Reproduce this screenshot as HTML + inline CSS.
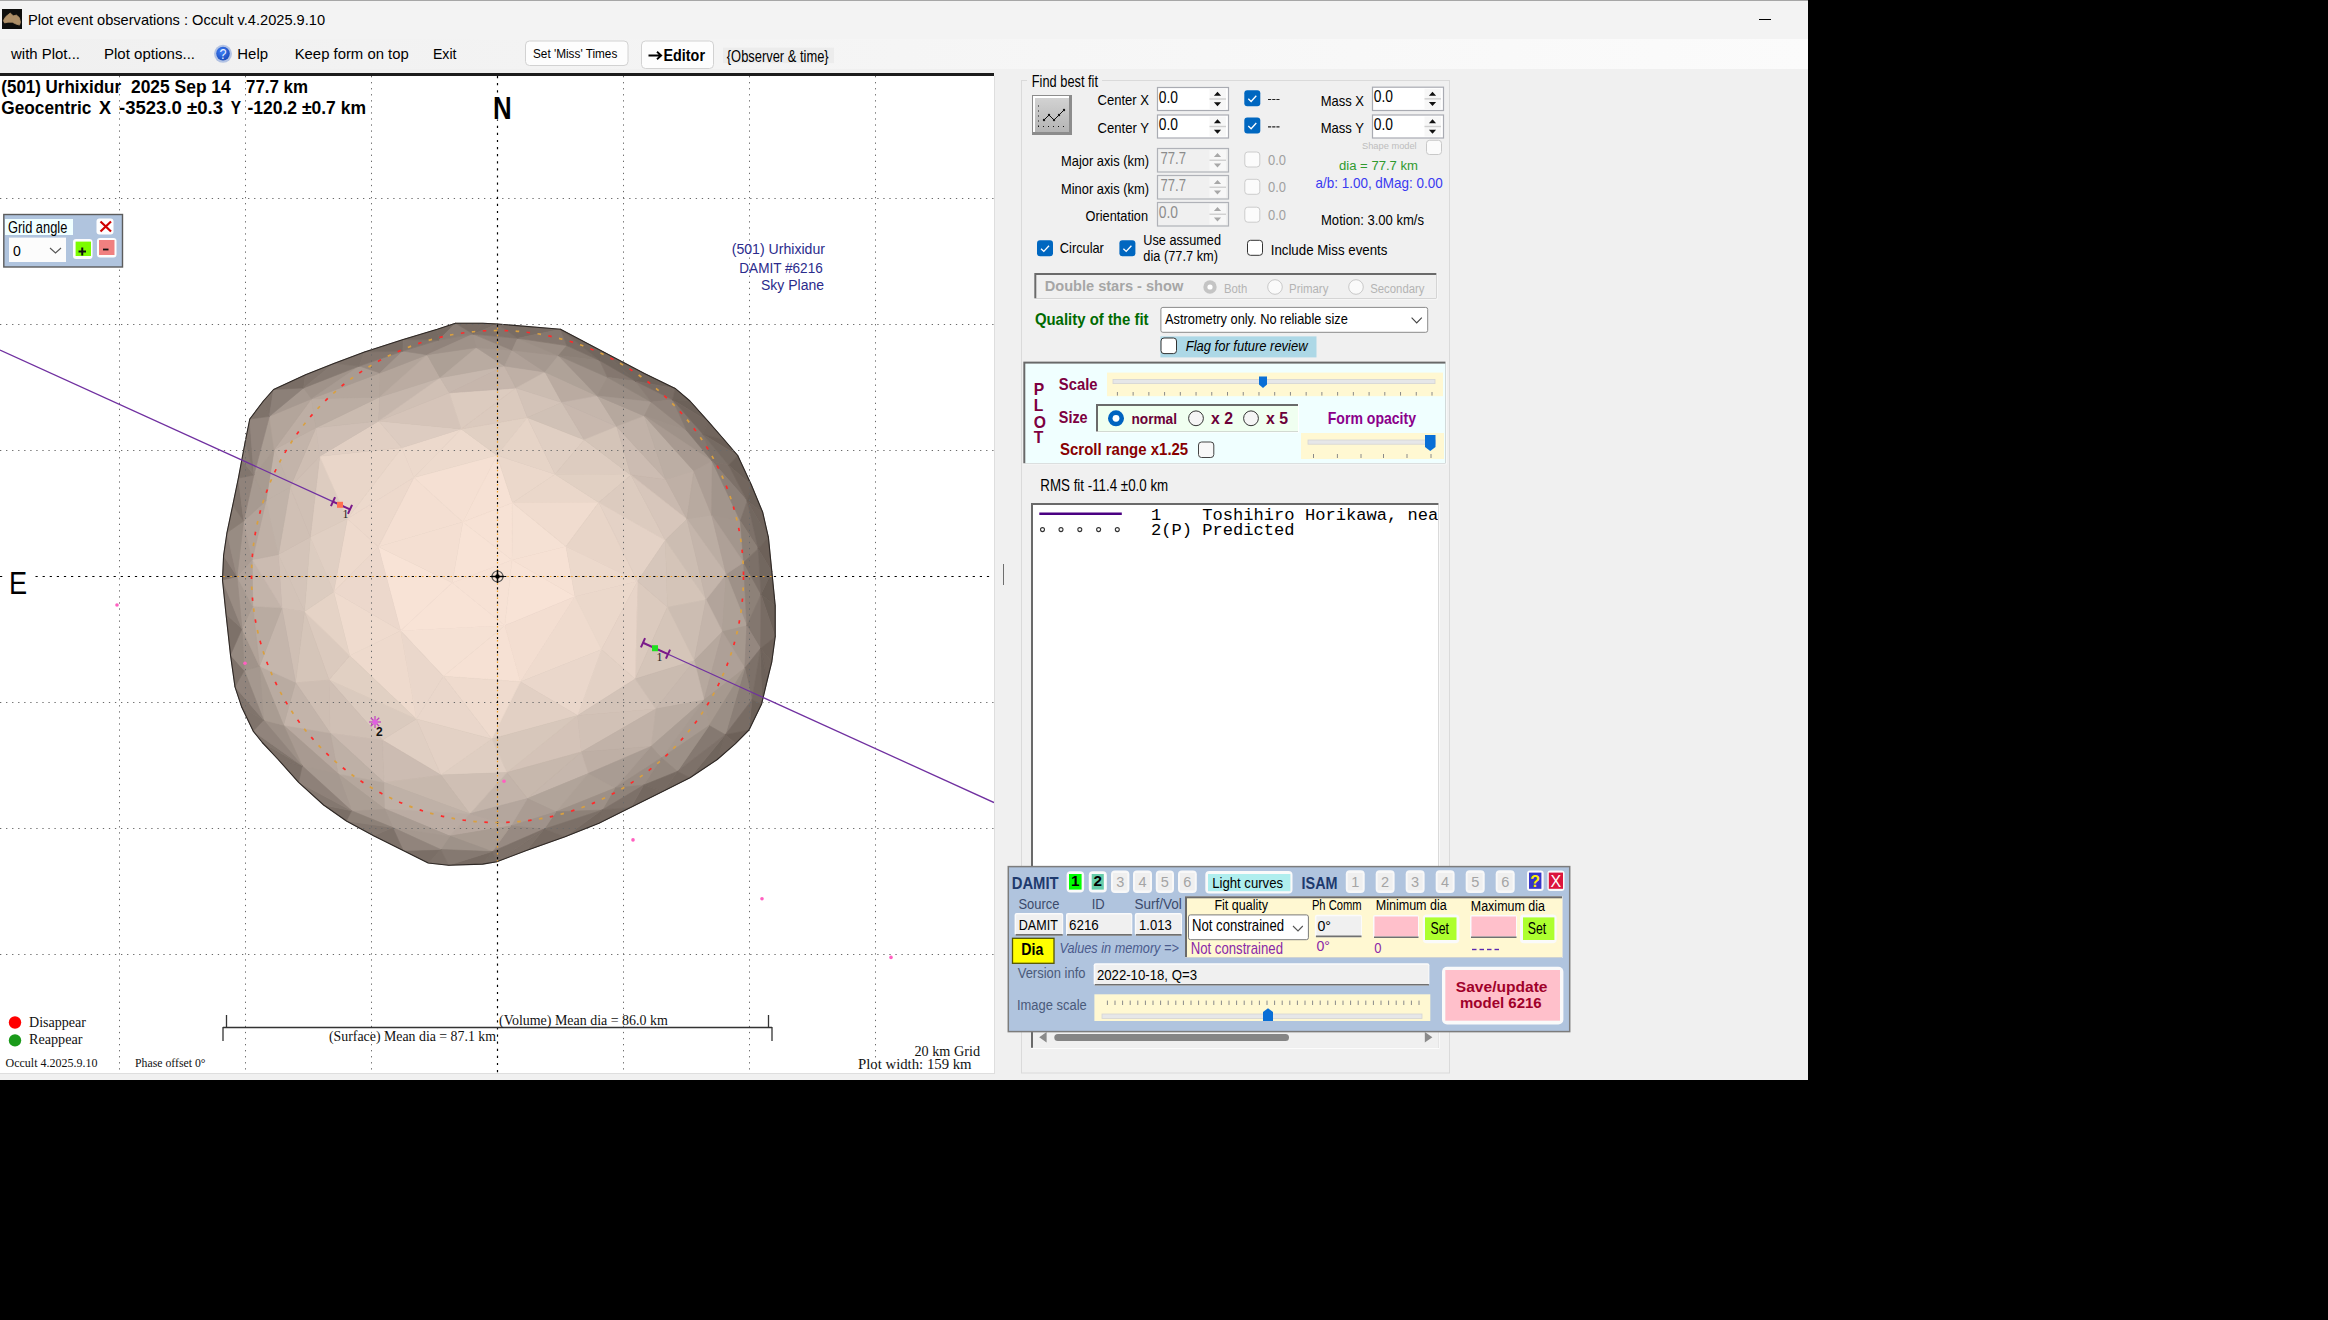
<!DOCTYPE html>
<html><head><meta charset="utf-8"><style>
html,body{margin:0;padding:0;width:2328px;height:1320px;background:#000;overflow:hidden}
svg{display:block}
</style></head><body>
<svg width="1808" height="1080" viewBox="0 0 1808 1080" font-family="Liberation Sans" style="position:absolute;left:0;top:0">
<rect x="0.00" y="0.00" width="1808.00" height="39.00" fill="#f3f3f3"/>
<line x1="0.00" y1="0.50" x2="1808.00" y2="0.50" stroke="#a6a6a6" stroke-width="1"/>
<rect x="2.00" y="9.00" width="20.00" height="20.00" fill="#0e0e0c"/>
<path d="M3.4,20.6 L5.7,16.7 L10.2,13.1 L12.3,14.9 L13.6,15.8 L16.4,15.1 L19.3,17.6 L20.5,22.2 L19.5,25.1 L15.9,24 L12.3,22.2 L8,22.2 L4.5,22.9Z" fill="#ad8e66" stroke="#ad8e66" stroke-width="0.8" stroke-linejoin="round"/>
<text x="28.00" y="24.70" font-family="Liberation Sans" font-size="15.41" fill="#000" textLength="297.03" lengthAdjust="spacingAndGlyphs" xml:space="preserve">Plot event observations : Occult v.4.2025.9.10</text>
<line x1="1759.00" y1="19.50" x2="1771.00" y2="19.50" stroke="#000" stroke-width="1"/>
<defs><linearGradient id="mg" x1="0" x2="1" y1="0" y2="0"><stop offset="0" stop-color="#f0f0f0"/><stop offset="0.5" stop-color="#f5f5f5"/><stop offset="1" stop-color="#fbfbfb"/></linearGradient></defs>
<rect x="0.00" y="39.00" width="1808.00" height="30.00" fill="url(#mg)"/>
<rect x="0.00" y="69.00" width="1808.00" height="1011.00" fill="#f0f0f0"/>
<text x="11.07" y="58.60" font-family="Liberation Sans" font-size="15.12" fill="#000" textLength="68.89" lengthAdjust="spacingAndGlyphs" xml:space="preserve">with Plot...</text>
<text x="104.00" y="58.60" font-family="Liberation Sans" font-size="15.12" fill="#000" textLength="90.99" lengthAdjust="spacingAndGlyphs" xml:space="preserve">Plot options...</text>
<defs><radialGradient id="hg" cx="0.4" cy="0.35" r="0.7"><stop offset="0" stop-color="#3f7ff8"/><stop offset="1" stop-color="#1a4ab8"/></radialGradient></defs>
<circle cx="223" cy="53.8" r="9" fill="#b3c3e4"/>
<circle cx="223" cy="53.6" r="6.8" fill="url(#hg)"/>
<text x="219.60" y="58.60" font-family="Liberation Sans" font-size="13.95" fill="#e8f0ff" textLength="7.01" lengthAdjust="spacingAndGlyphs" xml:space="preserve">?</text>
<text x="237.30" y="58.60" font-family="Liberation Sans" font-size="15.12" fill="#000" textLength="30.73" lengthAdjust="spacingAndGlyphs" xml:space="preserve">Help</text>
<text x="294.70" y="58.60" font-family="Liberation Sans" font-size="15.12" fill="#000" textLength="114.02" lengthAdjust="spacingAndGlyphs" xml:space="preserve">Keep form on top</text>
<text x="433.00" y="58.60" font-family="Liberation Sans" font-size="15.12" fill="#000" textLength="23.43" lengthAdjust="spacingAndGlyphs" xml:space="preserve">Exit</text>
<rect x="525.50" y="41.00" width="102.50" height="24.50" fill="#fdfdfd" stroke="#d2d2d2" stroke-width="1" rx="4"/>
<text x="533.00" y="58.00" font-family="Liberation Sans" font-size="13.08" fill="#000" textLength="84.31" lengthAdjust="spacingAndGlyphs" xml:space="preserve">Set &#x27;Miss&#x27; Times</text>
<rect x="641.50" y="41.00" width="72.00" height="27.50" fill="#fdfdfd" stroke="#d2d2d2" stroke-width="1" rx="4"/>
<path d="M648.5,55.5 h12 M657,51.8 l4.2,3.7 l-4.2,3.7" fill="none" stroke="#000" stroke-width="1.8"/>
<text x="663.50" y="60.60" font-family="Liberation Sans" font-size="16.42" fill="#000" font-weight="bold" textLength="41.48" lengthAdjust="spacingAndGlyphs" xml:space="preserve">Editor</text>
<rect x="723.00" y="47.70" width="111.00" height="15.40" fill="#ececec"/>
<text x="726.80" y="61.90" font-family="Liberation Sans" font-size="15.70" fill="#000" textLength="101.83" lengthAdjust="spacingAndGlyphs" xml:space="preserve">{Observer &amp; time}</text>
<rect x="0.00" y="73.00" width="994.00" height="1000.00" fill="#fff"/>
<rect x="0.00" y="73.00" width="994.00" height="3.00" fill="#1c1c1c"/>
<line x1="994.50" y1="76.00" x2="994.50" y2="1073.00" stroke="#dedede" stroke-width="1"/>
<line x1="0.00" y1="1073.50" x2="995.00" y2="1073.50" stroke="#dedede" stroke-width="1"/>
<line x1="1003.50" y1="564.00" x2="1003.50" y2="585.00" stroke="#6e6e6e" stroke-width="1"/>
<svg x="0" y="76" width="994" height="997" viewBox="0 76 994 997" overflow="hidden">
<polygon points="455.5,323.2 482.7,323.2 497.5,324.0 560.5,329.3 603.6,352.0 644.5,373.6 675.2,388.4 690.0,401.0 708.2,421.4 724.0,439.5 737.7,455.5 751.4,485.0 762.7,512.3 768.4,537.3 771.8,571.4 775.2,605.5 775.2,636.8 771.8,661.8 767.3,680.0 761.6,703.9 749.0,730.0 735.5,743.6 717.3,759.5 690.0,777.7 662.7,791.4 631.0,807.3 599.0,823.2 565.0,836.8 526.4,850.5 496.8,861.8 482.7,864.1 448.6,865.2 428.2,863.0 403.2,850.5 373.6,835.7 346.4,821.0 323.6,805.0 298.6,782.3 278.2,759.5 262.3,742.5 253.2,731.1 241.8,707.3 235.0,686.8 230.5,655.0 226.0,614.0 222.5,580.0 223.6,555.5 227.0,532.7 232.7,505.5 238.4,478.2 241.8,460.0 245.2,441.8 249.8,419.0 263.4,401.0 273.6,389.5 305.5,374.8 333.9,363.4 364.5,352.0 403.2,339.5 437.3,329.3" fill="#a89a90"/>
<polygon points="512.0,560.0 575.0,596.5 504.8,625.5" fill="#f8e3d6" stroke="#f8e3d6" stroke-width="0.6" stroke-linejoin="round"/>
<polygon points="512.0,560.0 504.8,625.5 452.2,582.7" fill="#f7e2d5" stroke="#f7e2d5" stroke-width="0.6" stroke-linejoin="round"/>
<polygon points="512.0,560.0 452.2,582.7 462.8,522.1" fill="#f8e3d6" stroke="#f8e3d6" stroke-width="0.6" stroke-linejoin="round"/>
<polygon points="512.0,560.0 462.8,522.1 512.5,502.7" fill="#f7e2d5" stroke="#f7e2d5" stroke-width="0.6" stroke-linejoin="round"/>
<polygon points="512.0,560.0 512.5,502.7 566.0,546.5" fill="#f5e1d4" stroke="#f5e1d4" stroke-width="0.6" stroke-linejoin="round"/>
<polygon points="512.0,560.0 566.0,546.5 575.0,596.5" fill="#f6e1d4" stroke="#f6e1d4" stroke-width="0.6" stroke-linejoin="round"/>
<polygon points="575.0,596.5 601.5,649.6 637.6,581.3" fill="#ebd8cb" stroke="#ebd8cb" stroke-width="0.6" stroke-linejoin="round"/>
<polygon points="575.0,596.5 520.4,681.8 601.5,649.6" fill="#efdbce" stroke="#efdbce" stroke-width="0.6" stroke-linejoin="round"/>
<polygon points="575.0,596.5 504.8,625.5 520.4,681.8" fill="#f3ded1" stroke="#f3ded1" stroke-width="0.6" stroke-linejoin="round"/>
<polygon points="504.8,625.5 443.4,676.2 520.4,681.8" fill="#f6e1d4" stroke="#f6e1d4" stroke-width="0.6" stroke-linejoin="round"/>
<polygon points="504.8,625.5 400.6,630.8 443.4,676.2" fill="#f5e1d4" stroke="#f5e1d4" stroke-width="0.6" stroke-linejoin="round"/>
<polygon points="504.8,625.5 452.2,582.7 400.6,630.8" fill="#f8e3d6" stroke="#f8e3d6" stroke-width="0.6" stroke-linejoin="round"/>
<polygon points="452.2,582.7 378.3,546.8 400.6,630.8" fill="#f8e3d6" stroke="#f8e3d6" stroke-width="0.6" stroke-linejoin="round"/>
<polygon points="452.2,582.7 462.8,522.1 378.3,546.8" fill="#f4dfd2" stroke="#f4dfd2" stroke-width="0.6" stroke-linejoin="round"/>
<polygon points="462.8,522.1 413.9,477.6 378.3,546.8" fill="#f4dfd2" stroke="#f4dfd2" stroke-width="0.6" stroke-linejoin="round"/>
<polygon points="462.8,522.1 496.9,455.3 413.9,477.6" fill="#f5e0d3" stroke="#f5e0d3" stroke-width="0.6" stroke-linejoin="round"/>
<polygon points="462.8,522.1 512.5,502.7 496.9,455.3" fill="#f6e1d4" stroke="#f6e1d4" stroke-width="0.6" stroke-linejoin="round"/>
<polygon points="512.5,502.7 555.0,474.2 496.9,455.3" fill="#ebd8cb" stroke="#ebd8cb" stroke-width="0.6" stroke-linejoin="round"/>
<polygon points="512.5,502.7 598.8,502.5 555.0,474.2" fill="#ead7ca" stroke="#ead7ca" stroke-width="0.6" stroke-linejoin="round"/>
<polygon points="512.5,502.7 566.0,546.5 598.8,502.5" fill="#f0dccf" stroke="#f0dccf" stroke-width="0.6" stroke-linejoin="round"/>
<polygon points="566.0,546.5 637.6,581.3 598.8,502.5" fill="#e8d5c8" stroke="#e8d5c8" stroke-width="0.6" stroke-linejoin="round"/>
<polygon points="566.0,546.5 575.0,596.5 637.6,581.3" fill="#ecd9cc" stroke="#ecd9cc" stroke-width="0.6" stroke-linejoin="round"/>
<polygon points="637.6,581.3 635.2,678.9 667.4,607.0" fill="#dbcabe" stroke="#dbcabe" stroke-width="0.6" stroke-linejoin="round"/>
<polygon points="637.6,581.3 601.5,649.6 635.2,678.9" fill="#e7d4c8" stroke="#e7d4c8" stroke-width="0.6" stroke-linejoin="round"/>
<polygon points="601.5,649.6 577.6,715.5 635.2,678.9" fill="#e3d1c5" stroke="#e3d1c5" stroke-width="0.6" stroke-linejoin="round"/>
<polygon points="601.5,649.6 520.4,681.8 577.6,715.5" fill="#ead7cb" stroke="#ead7cb" stroke-width="0.6" stroke-linejoin="round"/>
<polygon points="520.4,681.8 491.8,738.9 577.6,715.5" fill="#e2d0c4" stroke="#e2d0c4" stroke-width="0.6" stroke-linejoin="round"/>
<polygon points="520.4,681.8 443.4,676.2 491.8,738.9" fill="#efdbce" stroke="#efdbce" stroke-width="0.6" stroke-linejoin="round"/>
<polygon points="443.4,676.2 416.4,719.0 491.8,738.9" fill="#ead7cb" stroke="#ead7cb" stroke-width="0.6" stroke-linejoin="round"/>
<polygon points="443.4,676.2 400.6,630.8 416.4,719.0" fill="#ead7cb" stroke="#ead7cb" stroke-width="0.6" stroke-linejoin="round"/>
<polygon points="400.6,630.8 349.7,655.8 416.4,719.0" fill="#eedacd" stroke="#eedacd" stroke-width="0.6" stroke-linejoin="round"/>
<polygon points="400.6,630.8 333.7,591.8 349.7,655.8" fill="#efdbce" stroke="#efdbce" stroke-width="0.6" stroke-linejoin="round"/>
<polygon points="400.6,630.8 378.3,546.8 333.7,591.8" fill="#ecd8cc" stroke="#ecd8cc" stroke-width="0.6" stroke-linejoin="round"/>
<polygon points="378.3,546.8 347.3,518.8 333.7,591.8" fill="#eedacd" stroke="#eedacd" stroke-width="0.6" stroke-linejoin="round"/>
<polygon points="378.3,546.8 413.9,477.6 347.3,518.8" fill="#edd9cc" stroke="#edd9cc" stroke-width="0.6" stroke-linejoin="round"/>
<polygon points="413.9,477.6 401.8,447.8 347.3,518.8" fill="#ecd9cc" stroke="#ecd9cc" stroke-width="0.6" stroke-linejoin="round"/>
<polygon points="413.9,477.6 461.2,428.9 401.8,447.8" fill="#ecd9cc" stroke="#ecd9cc" stroke-width="0.6" stroke-linejoin="round"/>
<polygon points="413.9,477.6 496.9,455.3 461.2,428.9" fill="#eddacd" stroke="#eddacd" stroke-width="0.6" stroke-linejoin="round"/>
<polygon points="496.9,455.3 527.4,417.5 461.2,428.9" fill="#e1d0c3" stroke="#e1d0c3" stroke-width="0.6" stroke-linejoin="round"/>
<polygon points="496.9,455.3 555.0,474.2 527.4,417.5" fill="#e6d4c7" stroke="#e6d4c7" stroke-width="0.6" stroke-linejoin="round"/>
<polygon points="555.0,474.2 584.3,439.8 527.4,417.5" fill="#e0cfc3" stroke="#e0cfc3" stroke-width="0.6" stroke-linejoin="round"/>
<polygon points="555.0,474.2 630.9,474.9 584.3,439.8" fill="#ddccc0" stroke="#ddccc0" stroke-width="0.6" stroke-linejoin="round"/>
<polygon points="555.0,474.2 598.8,502.5 630.9,474.9" fill="#e1d0c3" stroke="#e1d0c3" stroke-width="0.6" stroke-linejoin="round"/>
<polygon points="598.8,502.5 665.4,540.2 630.9,474.9" fill="#dccbbf" stroke="#dccbbf" stroke-width="0.6" stroke-linejoin="round"/>
<polygon points="598.8,502.5 637.6,581.3 665.4,540.2" fill="#e4d2c6" stroke="#e4d2c6" stroke-width="0.6" stroke-linejoin="round"/>
<polygon points="637.6,581.3 667.4,607.0 665.4,540.2" fill="#d6c6bb" stroke="#d6c6bb" stroke-width="0.6" stroke-linejoin="round"/>
<polygon points="667.4,607.0 694.2,660.8 706.0,599.5" fill="#ccbdb2" stroke="#ccbdb2" stroke-width="0.6" stroke-linejoin="round"/>
<polygon points="667.4,607.0 635.2,678.9 694.2,660.8" fill="#d5c5b9" stroke="#d5c5b9" stroke-width="0.6" stroke-linejoin="round"/>
<polygon points="635.2,678.9 655.7,709.0 694.2,660.8" fill="#cabbb0" stroke="#cabbb0" stroke-width="0.6" stroke-linejoin="round"/>
<polygon points="635.2,678.9 577.6,715.5 655.7,709.0" fill="#d3c3b8" stroke="#d3c3b8" stroke-width="0.6" stroke-linejoin="round"/>
<polygon points="577.6,715.5 581.3,752.0 655.7,709.0" fill="#d1c1b6" stroke="#d1c1b6" stroke-width="0.6" stroke-linejoin="round"/>
<polygon points="577.6,715.5 506.9,772.6 581.3,752.0" fill="#d4c3b8" stroke="#d4c3b8" stroke-width="0.6" stroke-linejoin="round"/>
<polygon points="577.6,715.5 491.8,738.9 506.9,772.6" fill="#d7c7bb" stroke="#d7c7bb" stroke-width="0.6" stroke-linejoin="round"/>
<polygon points="491.8,738.9 440.8,775.0 506.9,772.6" fill="#dfcec2" stroke="#dfcec2" stroke-width="0.6" stroke-linejoin="round"/>
<polygon points="491.8,738.9 416.4,719.0 440.8,775.0" fill="#e3d1c5" stroke="#e3d1c5" stroke-width="0.6" stroke-linejoin="round"/>
<polygon points="416.4,719.0 382.3,740.0 440.8,775.0" fill="#e0cfc3" stroke="#e0cfc3" stroke-width="0.6" stroke-linejoin="round"/>
<polygon points="416.4,719.0 329.0,679.7 382.3,740.0" fill="#dacabe" stroke="#dacabe" stroke-width="0.6" stroke-linejoin="round"/>
<polygon points="416.4,719.0 349.7,655.8 329.0,679.7" fill="#e1d0c3" stroke="#e1d0c3" stroke-width="0.6" stroke-linejoin="round"/>
<polygon points="349.7,655.8 304.5,611.6 329.0,679.7" fill="#dbcabe" stroke="#dbcabe" stroke-width="0.6" stroke-linejoin="round"/>
<polygon points="349.7,655.8 333.7,591.8 304.5,611.6" fill="#e5d3c6" stroke="#e5d3c6" stroke-width="0.6" stroke-linejoin="round"/>
<polygon points="333.7,591.8 310.3,536.9 304.5,611.6" fill="#dcccc0" stroke="#dcccc0" stroke-width="0.6" stroke-linejoin="round"/>
<polygon points="333.7,591.8 347.3,518.8 310.3,536.9" fill="#e0cfc3" stroke="#e0cfc3" stroke-width="0.6" stroke-linejoin="round"/>
<polygon points="347.3,518.8 319.7,456.2 310.3,536.9" fill="#ddccc0" stroke="#ddccc0" stroke-width="0.6" stroke-linejoin="round"/>
<polygon points="347.3,518.8 401.8,447.8 319.7,456.2" fill="#e9d6c9" stroke="#e9d6c9" stroke-width="0.6" stroke-linejoin="round"/>
<polygon points="401.8,447.8 378.7,421.0 319.7,456.2" fill="#e1cfc3" stroke="#e1cfc3" stroke-width="0.6" stroke-linejoin="round"/>
<polygon points="401.8,447.8 461.2,428.9 378.7,421.0" fill="#ddccc1" stroke="#ddccc1" stroke-width="0.6" stroke-linejoin="round"/>
<polygon points="461.2,428.9 449.4,392.8 378.7,421.0" fill="#d5c4b9" stroke="#d5c4b9" stroke-width="0.6" stroke-linejoin="round"/>
<polygon points="461.2,428.9 516.1,388.0 449.4,392.8" fill="#dccbbf" stroke="#dccbbf" stroke-width="0.6" stroke-linejoin="round"/>
<polygon points="461.2,428.9 527.4,417.5 516.1,388.0" fill="#dbcabe" stroke="#dbcabe" stroke-width="0.6" stroke-linejoin="round"/>
<polygon points="527.4,417.5 561.9,402.6 516.1,388.0" fill="#d3c3b8" stroke="#d3c3b8" stroke-width="0.6" stroke-linejoin="round"/>
<polygon points="527.4,417.5 584.3,439.8 561.9,402.6" fill="#d0c1b6" stroke="#d0c1b6" stroke-width="0.6" stroke-linejoin="round"/>
<polygon points="584.3,439.8 616.7,426.6 561.9,402.6" fill="#c8b8ae" stroke="#c8b8ae" stroke-width="0.6" stroke-linejoin="round"/>
<polygon points="584.3,439.8 630.9,474.9 616.7,426.6" fill="#d4c4b8" stroke="#d4c4b8" stroke-width="0.6" stroke-linejoin="round"/>
<polygon points="630.9,474.9 665.7,479.4 616.7,426.6" fill="#ccbcb2" stroke="#ccbcb2" stroke-width="0.6" stroke-linejoin="round"/>
<polygon points="630.9,474.9 687.0,519.1 665.7,479.4" fill="#c9b9af" stroke="#c9b9af" stroke-width="0.6" stroke-linejoin="round"/>
<polygon points="630.9,474.9 665.4,540.2 687.0,519.1" fill="#d7c6bb" stroke="#d7c6bb" stroke-width="0.6" stroke-linejoin="round"/>
<polygon points="665.4,540.2 706.0,599.5 687.0,519.1" fill="#ccbdb2" stroke="#ccbdb2" stroke-width="0.6" stroke-linejoin="round"/>
<polygon points="665.4,540.2 667.4,607.0 706.0,599.5" fill="#d4c4b8" stroke="#d4c4b8" stroke-width="0.6" stroke-linejoin="round"/>
<polygon points="706.0,599.5 722.4,631.7 726.2,574.0" fill="#b2a49b" stroke="#b2a49b" stroke-width="0.6" stroke-linejoin="round"/>
<polygon points="706.0,599.5 694.2,660.8 722.4,631.7" fill="#c4b5ab" stroke="#c4b5ab" stroke-width="0.6" stroke-linejoin="round"/>
<polygon points="694.2,660.8 704.1,700.0 722.4,631.7" fill="#b6a89e" stroke="#b6a89e" stroke-width="0.6" stroke-linejoin="round"/>
<polygon points="694.2,660.8 655.7,709.0 704.1,700.0" fill="#c7b8ae" stroke="#c7b8ae" stroke-width="0.6" stroke-linejoin="round"/>
<polygon points="655.7,709.0 651.0,746.4 704.1,700.0" fill="#bbada3" stroke="#bbada3" stroke-width="0.6" stroke-linejoin="round"/>
<polygon points="655.7,709.0 581.3,752.0 651.0,746.4" fill="#c1b2a8" stroke="#c1b2a8" stroke-width="0.6" stroke-linejoin="round"/>
<polygon points="581.3,752.0 588.2,773.6 651.0,746.4" fill="#beafa5" stroke="#beafa5" stroke-width="0.6" stroke-linejoin="round"/>
<polygon points="581.3,752.0 527.4,798.6 588.2,773.6" fill="#c6b7ad" stroke="#c6b7ad" stroke-width="0.6" stroke-linejoin="round"/>
<polygon points="581.3,752.0 506.9,772.6 527.4,798.6" fill="#c7b8ad" stroke="#c7b8ad" stroke-width="0.6" stroke-linejoin="round"/>
<polygon points="506.9,772.6 469.8,813.8 527.4,798.6" fill="#c3b4aa" stroke="#c3b4aa" stroke-width="0.6" stroke-linejoin="round"/>
<polygon points="506.9,772.6 440.8,775.0 469.8,813.8" fill="#cfbfb4" stroke="#cfbfb4" stroke-width="0.6" stroke-linejoin="round"/>
<polygon points="440.8,775.0 383.8,782.3 469.8,813.8" fill="#c7b8ad" stroke="#c7b8ad" stroke-width="0.6" stroke-linejoin="round"/>
<polygon points="440.8,775.0 382.3,740.0 383.8,782.3" fill="#ccbcb2" stroke="#ccbcb2" stroke-width="0.6" stroke-linejoin="round"/>
<polygon points="382.3,740.0 330.1,733.0 383.8,782.3" fill="#cabab0" stroke="#cabab0" stroke-width="0.6" stroke-linejoin="round"/>
<polygon points="382.3,740.0 329.0,679.7 330.1,733.0" fill="#d0c0b5" stroke="#d0c0b5" stroke-width="0.6" stroke-linejoin="round"/>
<polygon points="329.0,679.7 295.5,682.4 330.1,733.0" fill="#cebeb3" stroke="#cebeb3" stroke-width="0.6" stroke-linejoin="round"/>
<polygon points="329.0,679.7 304.5,611.6 295.5,682.4" fill="#d5c5b9" stroke="#d5c5b9" stroke-width="0.6" stroke-linejoin="round"/>
<polygon points="304.5,611.6 281.9,608.0 295.5,682.4" fill="#cfbfb4" stroke="#cfbfb4" stroke-width="0.6" stroke-linejoin="round"/>
<polygon points="304.5,611.6 278.4,554.5 281.9,608.0" fill="#d3c3b8" stroke="#d3c3b8" stroke-width="0.6" stroke-linejoin="round"/>
<polygon points="304.5,611.6 310.3,536.9 278.4,554.5" fill="#d4c4b9" stroke="#d4c4b9" stroke-width="0.6" stroke-linejoin="round"/>
<polygon points="310.3,536.9 290.2,486.9 278.4,554.5" fill="#d0c0b5" stroke="#d0c0b5" stroke-width="0.6" stroke-linejoin="round"/>
<polygon points="310.3,536.9 319.7,456.2 290.2,486.9" fill="#d0c0b5" stroke="#d0c0b5" stroke-width="0.6" stroke-linejoin="round"/>
<polygon points="319.7,456.2 315.9,427.8 290.2,486.9" fill="#cebeb3" stroke="#cebeb3" stroke-width="0.6" stroke-linejoin="round"/>
<polygon points="319.7,456.2 378.7,421.0 315.9,427.8" fill="#cfbfb5" stroke="#cfbfb5" stroke-width="0.6" stroke-linejoin="round"/>
<polygon points="378.7,421.0 379.6,397.0 315.9,427.8" fill="#cabbb0" stroke="#cabbb0" stroke-width="0.6" stroke-linejoin="round"/>
<polygon points="378.7,421.0 440.2,377.8 379.6,397.0" fill="#c5b6ac" stroke="#c5b6ac" stroke-width="0.6" stroke-linejoin="round"/>
<polygon points="378.7,421.0 449.4,392.8 440.2,377.8" fill="#d0c0b5" stroke="#d0c0b5" stroke-width="0.6" stroke-linejoin="round"/>
<polygon points="449.4,392.8 504.5,366.0 440.2,377.8" fill="#c7b8ae" stroke="#c7b8ae" stroke-width="0.6" stroke-linejoin="round"/>
<polygon points="449.4,392.8 516.1,388.0 504.5,366.0" fill="#c6b6ac" stroke="#c6b6ac" stroke-width="0.6" stroke-linejoin="round"/>
<polygon points="516.1,388.0 545.1,372.1 504.5,366.0" fill="#bfb0a6" stroke="#bfb0a6" stroke-width="0.6" stroke-linejoin="round"/>
<polygon points="516.1,388.0 561.9,402.6 545.1,372.1" fill="#cbbcb1" stroke="#cbbcb1" stroke-width="0.6" stroke-linejoin="round"/>
<polygon points="561.9,402.6 597.4,395.9 545.1,372.1" fill="#baaba1" stroke="#baaba1" stroke-width="0.6" stroke-linejoin="round"/>
<polygon points="561.9,402.6 616.7,426.6 597.4,395.9" fill="#c5b6ac" stroke="#c5b6ac" stroke-width="0.6" stroke-linejoin="round"/>
<polygon points="616.7,426.6 644.4,415.9 597.4,395.9" fill="#b6a89e" stroke="#b6a89e" stroke-width="0.6" stroke-linejoin="round"/>
<polygon points="616.7,426.6 665.7,479.4 644.4,415.9" fill="#c1b2a8" stroke="#c1b2a8" stroke-width="0.6" stroke-linejoin="round"/>
<polygon points="665.7,479.4 693.9,471.0 644.4,415.9" fill="#bcaea4" stroke="#bcaea4" stroke-width="0.6" stroke-linejoin="round"/>
<polygon points="665.7,479.4 687.0,519.1 693.9,471.0" fill="#bfb0a6" stroke="#bfb0a6" stroke-width="0.6" stroke-linejoin="round"/>
<polygon points="687.0,519.1 711.7,515.2 693.9,471.0" fill="#b8aaa0" stroke="#b8aaa0" stroke-width="0.6" stroke-linejoin="round"/>
<polygon points="687.0,519.1 726.2,574.0 711.7,515.2" fill="#bbada3" stroke="#bbada3" stroke-width="0.6" stroke-linejoin="round"/>
<polygon points="687.0,519.1 706.0,599.5 726.2,574.0" fill="#c4b5ab" stroke="#c4b5ab" stroke-width="0.6" stroke-linejoin="round"/>
<polygon points="726.2,574.0 746.8,625.8 743.6,562.4" fill="#9e9188" stroke="#9e9188" stroke-width="0.6" stroke-linejoin="round"/>
<polygon points="726.2,574.0 722.4,631.7 746.8,625.8" fill="#aea197" stroke="#aea197" stroke-width="0.6" stroke-linejoin="round"/>
<polygon points="722.4,631.7 744.8,668.0 746.8,625.8" fill="#a5988e" stroke="#a5988e" stroke-width="0.6" stroke-linejoin="round"/>
<polygon points="722.4,631.7 704.1,700.0 744.8,668.0" fill="#aea097" stroke="#aea097" stroke-width="0.6" stroke-linejoin="round"/>
<polygon points="704.1,700.0 709.2,725.5 744.8,668.0" fill="#a6998f" stroke="#a6998f" stroke-width="0.6" stroke-linejoin="round"/>
<polygon points="704.1,700.0 661.5,757.9 709.2,725.5" fill="#a79a91" stroke="#a79a91" stroke-width="0.6" stroke-linejoin="round"/>
<polygon points="704.1,700.0 651.0,746.4 661.5,757.9" fill="#aa9d94" stroke="#aa9d94" stroke-width="0.6" stroke-linejoin="round"/>
<polygon points="651.0,746.4 614.9,788.1 661.5,757.9" fill="#a2958c" stroke="#a2958c" stroke-width="0.6" stroke-linejoin="round"/>
<polygon points="651.0,746.4 588.2,773.6 614.9,788.1" fill="#a99c93" stroke="#a99c93" stroke-width="0.6" stroke-linejoin="round"/>
<polygon points="588.2,773.6 556.0,811.8 614.9,788.1" fill="#ada096" stroke="#ada096" stroke-width="0.6" stroke-linejoin="round"/>
<polygon points="588.2,773.6 527.4,798.6 556.0,811.8" fill="#b1a49a" stroke="#b1a49a" stroke-width="0.6" stroke-linejoin="round"/>
<polygon points="527.4,798.6 510.9,825.9 556.0,811.8" fill="#aa9c93" stroke="#aa9c93" stroke-width="0.6" stroke-linejoin="round"/>
<polygon points="527.4,798.6 469.8,813.8 510.9,825.9" fill="#b4a69d" stroke="#b4a69d" stroke-width="0.6" stroke-linejoin="round"/>
<polygon points="469.8,813.8 449.9,836.1 510.9,825.9" fill="#b7a89f" stroke="#b7a89f" stroke-width="0.6" stroke-linejoin="round"/>
<polygon points="469.8,813.8 384.3,808.7 449.9,836.1" fill="#bbaca3" stroke="#bbaca3" stroke-width="0.6" stroke-linejoin="round"/>
<polygon points="469.8,813.8 383.8,782.3 384.3,808.7" fill="#bfb1a7" stroke="#bfb1a7" stroke-width="0.6" stroke-linejoin="round"/>
<polygon points="383.8,782.3 338.1,773.8 384.3,808.7" fill="#b5a79d" stroke="#b5a79d" stroke-width="0.6" stroke-linejoin="round"/>
<polygon points="383.8,782.3 330.1,733.0 338.1,773.8" fill="#beb0a6" stroke="#beb0a6" stroke-width="0.6" stroke-linejoin="round"/>
<polygon points="330.1,733.0 283.5,725.2 338.1,773.8" fill="#b8a9a0" stroke="#b8a9a0" stroke-width="0.6" stroke-linejoin="round"/>
<polygon points="330.1,733.0 295.5,682.4 283.5,725.2" fill="#c3b4aa" stroke="#c3b4aa" stroke-width="0.6" stroke-linejoin="round"/>
<polygon points="295.5,682.4 259.5,666.2 283.5,725.2" fill="#b9aba1" stroke="#b9aba1" stroke-width="0.6" stroke-linejoin="round"/>
<polygon points="295.5,682.4 281.9,608.0 259.5,666.2" fill="#c5b6ac" stroke="#c5b6ac" stroke-width="0.6" stroke-linejoin="round"/>
<polygon points="281.9,608.0 252.7,606.2 259.5,666.2" fill="#b9aba1" stroke="#b9aba1" stroke-width="0.6" stroke-linejoin="round"/>
<polygon points="281.9,608.0 252.2,559.6 252.7,606.2" fill="#c3b4aa" stroke="#c3b4aa" stroke-width="0.6" stroke-linejoin="round"/>
<polygon points="281.9,608.0 278.4,554.5 252.2,559.6" fill="#cbbbb1" stroke="#cbbbb1" stroke-width="0.6" stroke-linejoin="round"/>
<polygon points="278.4,554.5 266.0,500.8 252.2,559.6" fill="#bfb0a6" stroke="#bfb0a6" stroke-width="0.6" stroke-linejoin="round"/>
<polygon points="278.4,554.5 290.2,486.9 266.0,500.8" fill="#c1b3a9" stroke="#c1b3a9" stroke-width="0.6" stroke-linejoin="round"/>
<polygon points="290.2,486.9 274.2,449.6 266.0,500.8" fill="#c1b3a9" stroke="#c1b3a9" stroke-width="0.6" stroke-linejoin="round"/>
<polygon points="290.2,486.9 315.9,427.8 274.2,449.6" fill="#c3b4aa" stroke="#c3b4aa" stroke-width="0.6" stroke-linejoin="round"/>
<polygon points="315.9,427.8 311.5,398.8 274.2,449.6" fill="#bdaea4" stroke="#bdaea4" stroke-width="0.6" stroke-linejoin="round"/>
<polygon points="315.9,427.8 379.6,397.0 311.5,398.8" fill="#bbada3" stroke="#bbada3" stroke-width="0.6" stroke-linejoin="round"/>
<polygon points="379.6,397.0 380.0,372.9 311.5,398.8" fill="#b5a79d" stroke="#b5a79d" stroke-width="0.6" stroke-linejoin="round"/>
<polygon points="379.6,397.0 427.2,354.7 380.0,372.9" fill="#b3a59b" stroke="#b3a59b" stroke-width="0.6" stroke-linejoin="round"/>
<polygon points="379.6,397.0 440.2,377.8 427.2,354.7" fill="#bbaca2" stroke="#bbaca2" stroke-width="0.6" stroke-linejoin="round"/>
<polygon points="440.2,377.8 476.5,347.6 427.2,354.7" fill="#ada096" stroke="#ada096" stroke-width="0.6" stroke-linejoin="round"/>
<polygon points="440.2,377.8 504.5,366.0 476.5,347.6" fill="#b9aba1" stroke="#b9aba1" stroke-width="0.6" stroke-linejoin="round"/>
<polygon points="504.5,366.0 512.2,350.2 476.5,347.6" fill="#a69990" stroke="#a69990" stroke-width="0.6" stroke-linejoin="round"/>
<polygon points="504.5,366.0 545.1,372.1 512.2,350.2" fill="#afa198" stroke="#afa198" stroke-width="0.6" stroke-linejoin="round"/>
<polygon points="545.1,372.1 558.5,355.6 512.2,350.2" fill="#a69990" stroke="#a69990" stroke-width="0.6" stroke-linejoin="round"/>
<polygon points="545.1,372.1 597.4,395.9 558.5,355.6" fill="#afa298" stroke="#afa298" stroke-width="0.6" stroke-linejoin="round"/>
<polygon points="597.4,395.9 607.5,377.3 558.5,355.6" fill="#9f9289" stroke="#9f9289" stroke-width="0.6" stroke-linejoin="round"/>
<polygon points="597.4,395.9 651.3,402.0 607.5,377.3" fill="#9b8e85" stroke="#9b8e85" stroke-width="0.6" stroke-linejoin="round"/>
<polygon points="597.4,395.9 644.4,415.9 651.3,402.0" fill="#a69990" stroke="#a69990" stroke-width="0.6" stroke-linejoin="round"/>
<polygon points="644.4,415.9 686.6,430.5 651.3,402.0" fill="#9d9087" stroke="#9d9087" stroke-width="0.6" stroke-linejoin="round"/>
<polygon points="644.4,415.9 712.2,461.2 686.6,430.5" fill="#9f9289" stroke="#9f9289" stroke-width="0.6" stroke-linejoin="round"/>
<polygon points="644.4,415.9 693.9,471.0 712.2,461.2" fill="#a89a91" stroke="#a89a91" stroke-width="0.6" stroke-linejoin="round"/>
<polygon points="693.9,471.0 711.7,515.2 712.2,461.2" fill="#ac9e95" stroke="#ac9e95" stroke-width="0.6" stroke-linejoin="round"/>
<polygon points="711.7,515.2 740.3,521.0 712.2,461.2" fill="#a2958c" stroke="#a2958c" stroke-width="0.6" stroke-linejoin="round"/>
<polygon points="711.7,515.2 743.6,562.4 740.3,521.0" fill="#a3968d" stroke="#a3968d" stroke-width="0.6" stroke-linejoin="round"/>
<polygon points="711.7,515.2 726.2,574.0 743.6,562.4" fill="#aea097" stroke="#aea097" stroke-width="0.6" stroke-linejoin="round"/>
<polygon points="743.6,562.4 746.8,625.8 761.0,594.4" fill="#8d8178" stroke="#8d8178" stroke-width="0.6" stroke-linejoin="round"/>
<polygon points="746.8,625.8 760.5,648.5 761.0,594.4" fill="#83776f" stroke="#83776f" stroke-width="0.6" stroke-linejoin="round"/>
<polygon points="746.8,625.8 744.8,668.0 760.5,648.5" fill="#94877f" stroke="#94877f" stroke-width="0.6" stroke-linejoin="round"/>
<polygon points="744.8,668.0 751.9,699.8 760.5,648.5" fill="#7d7169" stroke="#7d7169" stroke-width="0.6" stroke-linejoin="round"/>
<polygon points="744.8,668.0 725.3,734.7 751.9,699.8" fill="#8b7f77" stroke="#8b7f77" stroke-width="0.6" stroke-linejoin="round"/>
<polygon points="744.8,668.0 709.2,725.5 725.3,734.7" fill="#9a8e85" stroke="#9a8e85" stroke-width="0.6" stroke-linejoin="round"/>
<polygon points="709.2,725.5 677.4,771.4 725.3,734.7" fill="#857971" stroke="#857971" stroke-width="0.6" stroke-linejoin="round"/>
<polygon points="709.2,725.5 661.5,757.9 677.4,771.4" fill="#9c9087" stroke="#9c9087" stroke-width="0.6" stroke-linejoin="round"/>
<polygon points="661.5,757.9 643.7,785.1 677.4,771.4" fill="#93877e" stroke="#93877e" stroke-width="0.6" stroke-linejoin="round"/>
<polygon points="661.5,757.9 614.9,788.1 643.7,785.1" fill="#998c83" stroke="#998c83" stroke-width="0.6" stroke-linejoin="round"/>
<polygon points="614.9,788.1 602.1,810.0 643.7,785.1" fill="#8f837a" stroke="#8f837a" stroke-width="0.6" stroke-linejoin="round"/>
<polygon points="614.9,788.1 556.0,811.8 602.1,810.0" fill="#9d9087" stroke="#9d9087" stroke-width="0.6" stroke-linejoin="round"/>
<polygon points="556.0,811.8 544.1,829.1 602.1,810.0" fill="#8d8178" stroke="#8d8178" stroke-width="0.6" stroke-linejoin="round"/>
<polygon points="556.0,811.8 510.9,825.9 544.1,829.1" fill="#9f928a" stroke="#9f928a" stroke-width="0.6" stroke-linejoin="round"/>
<polygon points="510.9,825.9 492.3,851.6 544.1,829.1" fill="#978a82" stroke="#978a82" stroke-width="0.6" stroke-linejoin="round"/>
<polygon points="510.9,825.9 449.9,836.1 492.3,851.6" fill="#a89b91" stroke="#a89b91" stroke-width="0.6" stroke-linejoin="round"/>
<polygon points="449.9,836.1 440.8,849.5 492.3,851.6" fill="#9e9289" stroke="#9e9289" stroke-width="0.6" stroke-linejoin="round"/>
<polygon points="449.9,836.1 392.8,827.6 440.8,849.5" fill="#a5988f" stroke="#a5988f" stroke-width="0.6" stroke-linejoin="round"/>
<polygon points="449.9,836.1 384.3,808.7 392.8,827.6" fill="#a89b92" stroke="#a89b92" stroke-width="0.6" stroke-linejoin="round"/>
<polygon points="384.3,808.7 351.6,810.8 392.8,827.6" fill="#a4978e" stroke="#a4978e" stroke-width="0.6" stroke-linejoin="round"/>
<polygon points="384.3,808.7 338.1,773.8 351.6,810.8" fill="#ab9e94" stroke="#ab9e94" stroke-width="0.6" stroke-linejoin="round"/>
<polygon points="338.1,773.8 302.2,765.8 351.6,810.8" fill="#a69990" stroke="#a69990" stroke-width="0.6" stroke-linejoin="round"/>
<polygon points="338.1,773.8 283.5,725.2 302.2,765.8" fill="#a89a91" stroke="#a89a91" stroke-width="0.6" stroke-linejoin="round"/>
<polygon points="283.5,725.2 263.6,720.1 302.2,765.8" fill="#9d9087" stroke="#9d9087" stroke-width="0.6" stroke-linejoin="round"/>
<polygon points="283.5,725.2 259.5,666.2 263.6,720.1" fill="#a99c92" stroke="#a99c92" stroke-width="0.6" stroke-linejoin="round"/>
<polygon points="259.5,666.2 244.3,670.6 263.6,720.1" fill="#a5988f" stroke="#a5988f" stroke-width="0.6" stroke-linejoin="round"/>
<polygon points="259.5,666.2 242.0,628.8 244.3,670.6" fill="#a0938a" stroke="#a0938a" stroke-width="0.6" stroke-linejoin="round"/>
<polygon points="259.5,666.2 252.7,606.2 242.0,628.8" fill="#b1a399" stroke="#b1a399" stroke-width="0.6" stroke-linejoin="round"/>
<polygon points="252.7,606.2 237.0,576.4 242.0,628.8" fill="#a79a91" stroke="#a79a91" stroke-width="0.6" stroke-linejoin="round"/>
<polygon points="252.7,606.2 252.2,559.6 237.0,576.4" fill="#b0a299" stroke="#b0a299" stroke-width="0.6" stroke-linejoin="round"/>
<polygon points="252.2,559.6 243.7,521.0 237.0,576.4" fill="#aa9c93" stroke="#aa9c93" stroke-width="0.6" stroke-linejoin="round"/>
<polygon points="252.2,559.6 266.0,500.8 243.7,521.0" fill="#b1a39a" stroke="#b1a39a" stroke-width="0.6" stroke-linejoin="round"/>
<polygon points="266.0,500.8 253.9,475.0 243.7,521.0" fill="#a79a91" stroke="#a79a91" stroke-width="0.6" stroke-linejoin="round"/>
<polygon points="266.0,500.8 274.2,449.6 253.9,475.0" fill="#a89b91" stroke="#a89b91" stroke-width="0.6" stroke-linejoin="round"/>
<polygon points="274.2,449.6 269.4,416.3 253.9,475.0" fill="#ab9e94" stroke="#ab9e94" stroke-width="0.6" stroke-linejoin="round"/>
<polygon points="274.2,449.6 311.5,398.8 269.4,416.3" fill="#b3a59b" stroke="#b3a59b" stroke-width="0.6" stroke-linejoin="round"/>
<polygon points="311.5,398.8 303.6,387.9 269.4,416.3" fill="#a69990" stroke="#a69990" stroke-width="0.6" stroke-linejoin="round"/>
<polygon points="311.5,398.8 359.4,366.1 303.6,387.9" fill="#a0938a" stroke="#a0938a" stroke-width="0.6" stroke-linejoin="round"/>
<polygon points="311.5,398.8 380.0,372.9 359.4,366.1" fill="#a89b92" stroke="#a89b92" stroke-width="0.6" stroke-linejoin="round"/>
<polygon points="380.0,372.9 402.9,351.1 359.4,366.1" fill="#958880" stroke="#958880" stroke-width="0.6" stroke-linejoin="round"/>
<polygon points="380.0,372.9 427.2,354.7 402.9,351.1" fill="#a4978e" stroke="#a4978e" stroke-width="0.6" stroke-linejoin="round"/>
<polygon points="427.2,354.7 438.8,340.1 402.9,351.1" fill="#91847c" stroke="#91847c" stroke-width="0.6" stroke-linejoin="round"/>
<polygon points="427.2,354.7 473.3,334.1 438.8,340.1" fill="#90837b" stroke="#90837b" stroke-width="0.6" stroke-linejoin="round"/>
<polygon points="427.2,354.7 476.5,347.6 473.3,334.1" fill="#9f9289" stroke="#9f9289" stroke-width="0.6" stroke-linejoin="round"/>
<polygon points="476.5,347.6 512.2,350.2 473.3,334.1" fill="#a1948b" stroke="#a1948b" stroke-width="0.6" stroke-linejoin="round"/>
<polygon points="512.2,350.2 517.7,338.3 473.3,334.1" fill="#90837b" stroke="#90837b" stroke-width="0.6" stroke-linejoin="round"/>
<polygon points="512.2,350.2 558.5,355.6 517.7,338.3" fill="#9f9289" stroke="#9f9289" stroke-width="0.6" stroke-linejoin="round"/>
<polygon points="558.5,355.6 566.8,345.6 517.7,338.3" fill="#9b8e85" stroke="#9b8e85" stroke-width="0.6" stroke-linejoin="round"/>
<polygon points="558.5,355.6 599.7,360.5 566.8,345.6" fill="#8b7f76" stroke="#8b7f76" stroke-width="0.6" stroke-linejoin="round"/>
<polygon points="558.5,355.6 607.5,377.3 599.7,360.5" fill="#8f837a" stroke="#8f837a" stroke-width="0.6" stroke-linejoin="round"/>
<polygon points="607.5,377.3 635.5,381.2 599.7,360.5" fill="#84776f" stroke="#84776f" stroke-width="0.6" stroke-linejoin="round"/>
<polygon points="607.5,377.3 651.3,402.0 635.5,381.2" fill="#8f837a" stroke="#8f837a" stroke-width="0.6" stroke-linejoin="round"/>
<polygon points="651.3,402.0 672.6,399.8 635.5,381.2" fill="#897c74" stroke="#897c74" stroke-width="0.6" stroke-linejoin="round"/>
<polygon points="651.3,402.0 686.6,430.5 672.6,399.8" fill="#90837b" stroke="#90837b" stroke-width="0.6" stroke-linejoin="round"/>
<polygon points="686.6,430.5 703.0,434.3 672.6,399.8" fill="#847870" stroke="#847870" stroke-width="0.6" stroke-linejoin="round"/>
<polygon points="686.6,430.5 712.2,461.2 703.0,434.3" fill="#83776f" stroke="#83776f" stroke-width="0.6" stroke-linejoin="round"/>
<polygon points="712.2,461.2 728.7,465.3 703.0,434.3" fill="#7d726a" stroke="#7d726a" stroke-width="0.6" stroke-linejoin="round"/>
<polygon points="712.2,461.2 747.2,501.1 728.7,465.3" fill="#7d7169" stroke="#7d7169" stroke-width="0.6" stroke-linejoin="round"/>
<polygon points="712.2,461.2 740.3,521.0 747.2,501.1" fill="#8c8078" stroke="#8c8078" stroke-width="0.6" stroke-linejoin="round"/>
<polygon points="740.3,521.0 758.2,548.7 747.2,501.1" fill="#7d7169" stroke="#7d7169" stroke-width="0.6" stroke-linejoin="round"/>
<polygon points="740.3,521.0 743.6,562.4 758.2,548.7" fill="#8b7f76" stroke="#8b7f76" stroke-width="0.6" stroke-linejoin="round"/>
<polygon points="743.6,562.4 761.0,594.4 758.2,548.7" fill="#7c7068" stroke="#7c7068" stroke-width="0.6" stroke-linejoin="round"/>
<polygon points="761.0,594.4 775.2,605.5 771.8,571.4" fill="#6a5f57" stroke="#6a5f57" stroke-width="0.6" stroke-linejoin="round"/>
<polygon points="761.0,594.4 775.2,636.8 775.2,605.5" fill="#6c6159" stroke="#6c6159" stroke-width="0.6" stroke-linejoin="round"/>
<polygon points="761.0,594.4 760.5,648.5 775.2,636.8" fill="#786c64" stroke="#786c64" stroke-width="0.6" stroke-linejoin="round"/>
<polygon points="760.5,648.5 771.8,661.8 775.2,636.8" fill="#6f635b" stroke="#6f635b" stroke-width="0.6" stroke-linejoin="round"/>
<polygon points="760.5,648.5 767.3,680.0 771.8,661.8" fill="#70645c" stroke="#70645c" stroke-width="0.6" stroke-linejoin="round"/>
<polygon points="760.5,648.5 761.6,703.9 767.3,680.0" fill="#6d625a" stroke="#6d625a" stroke-width="0.6" stroke-linejoin="round"/>
<polygon points="760.5,648.5 751.9,699.8 761.6,703.9" fill="#756961" stroke="#756961" stroke-width="0.6" stroke-linejoin="round"/>
<polygon points="751.9,699.8 749.0,730.0 761.6,703.9" fill="#6c6159" stroke="#6c6159" stroke-width="0.6" stroke-linejoin="round"/>
<polygon points="751.9,699.8 725.3,734.7 749.0,730.0" fill="#786c64" stroke="#786c64" stroke-width="0.6" stroke-linejoin="round"/>
<polygon points="725.3,734.7 735.5,743.6 749.0,730.0" fill="#6d6159" stroke="#6d6159" stroke-width="0.6" stroke-linejoin="round"/>
<polygon points="725.3,734.7 717.3,759.5 735.5,743.6" fill="#73675f" stroke="#73675f" stroke-width="0.6" stroke-linejoin="round"/>
<polygon points="725.3,734.7 690.0,777.7 717.3,759.5" fill="#70655d" stroke="#70655d" stroke-width="0.6" stroke-linejoin="round"/>
<polygon points="725.3,734.7 677.4,771.4 690.0,777.7" fill="#7d7169" stroke="#7d7169" stroke-width="0.6" stroke-linejoin="round"/>
<polygon points="677.4,771.4 662.7,791.4 690.0,777.7" fill="#746860" stroke="#746860" stroke-width="0.6" stroke-linejoin="round"/>
<polygon points="677.4,771.4 643.7,785.1 662.7,791.4" fill="#766a62" stroke="#766a62" stroke-width="0.6" stroke-linejoin="round"/>
<polygon points="643.7,785.1 631.0,807.3 662.7,791.4" fill="#746860" stroke="#746860" stroke-width="0.6" stroke-linejoin="round"/>
<polygon points="643.7,785.1 602.1,810.0 631.0,807.3" fill="#7d7169" stroke="#7d7169" stroke-width="0.6" stroke-linejoin="round"/>
<polygon points="602.1,810.0 599.0,823.2 631.0,807.3" fill="#766a62" stroke="#766a62" stroke-width="0.6" stroke-linejoin="round"/>
<polygon points="602.1,810.0 565.0,836.8 599.0,823.2" fill="#746860" stroke="#746860" stroke-width="0.6" stroke-linejoin="round"/>
<polygon points="602.1,810.0 544.1,829.1 565.0,836.8" fill="#7c7068" stroke="#7c7068" stroke-width="0.6" stroke-linejoin="round"/>
<polygon points="544.1,829.1 526.4,850.5 565.0,836.8" fill="#766a62" stroke="#766a62" stroke-width="0.6" stroke-linejoin="round"/>
<polygon points="544.1,829.1 496.8,861.8 526.4,850.5" fill="#7c7068" stroke="#7c7068" stroke-width="0.6" stroke-linejoin="round"/>
<polygon points="544.1,829.1 492.3,851.6 496.8,861.8" fill="#7d7169" stroke="#7d7169" stroke-width="0.6" stroke-linejoin="round"/>
<polygon points="492.3,851.6 482.7,864.1 496.8,861.8" fill="#776c64" stroke="#776c64" stroke-width="0.6" stroke-linejoin="round"/>
<polygon points="492.3,851.6 448.6,865.2 482.7,864.1" fill="#766a62" stroke="#766a62" stroke-width="0.6" stroke-linejoin="round"/>
<polygon points="492.3,851.6 440.8,849.5 448.6,865.2" fill="#857971" stroke="#857971" stroke-width="0.6" stroke-linejoin="round"/>
<polygon points="440.8,849.5 428.2,863.0 448.6,865.2" fill="#7e726a" stroke="#7e726a" stroke-width="0.6" stroke-linejoin="round"/>
<polygon points="440.8,849.5 403.2,850.5 428.2,863.0" fill="#7a6e66" stroke="#7a6e66" stroke-width="0.6" stroke-linejoin="round"/>
<polygon points="440.8,849.5 392.8,827.6 403.2,850.5" fill="#91847c" stroke="#91847c" stroke-width="0.6" stroke-linejoin="round"/>
<polygon points="392.8,827.6 373.6,835.7 403.2,850.5" fill="#7d7169" stroke="#7d7169" stroke-width="0.6" stroke-linejoin="round"/>
<polygon points="392.8,827.6 346.4,821.0 373.6,835.7" fill="#83776f" stroke="#83776f" stroke-width="0.6" stroke-linejoin="round"/>
<polygon points="392.8,827.6 351.6,810.8 346.4,821.0" fill="#8d8178" stroke="#8d8178" stroke-width="0.6" stroke-linejoin="round"/>
<polygon points="351.6,810.8 323.6,805.0 346.4,821.0" fill="#7a6e66" stroke="#7a6e66" stroke-width="0.6" stroke-linejoin="round"/>
<polygon points="351.6,810.8 298.6,782.3 323.6,805.0" fill="#847870" stroke="#847870" stroke-width="0.6" stroke-linejoin="round"/>
<polygon points="351.6,810.8 302.2,765.8 298.6,782.3" fill="#8e8179" stroke="#8e8179" stroke-width="0.6" stroke-linejoin="round"/>
<polygon points="302.2,765.8 278.2,759.5 298.6,782.3" fill="#7b6f67" stroke="#7b6f67" stroke-width="0.6" stroke-linejoin="round"/>
<polygon points="302.2,765.8 262.3,742.5 278.2,759.5" fill="#7b6f67" stroke="#7b6f67" stroke-width="0.6" stroke-linejoin="round"/>
<polygon points="302.2,765.8 253.2,731.1 262.3,742.5" fill="#81756d" stroke="#81756d" stroke-width="0.6" stroke-linejoin="round"/>
<polygon points="302.2,765.8 263.6,720.1 253.2,731.1" fill="#91847c" stroke="#91847c" stroke-width="0.6" stroke-linejoin="round"/>
<polygon points="263.6,720.1 241.8,707.3 253.2,731.1" fill="#7f736b" stroke="#7f736b" stroke-width="0.6" stroke-linejoin="round"/>
<polygon points="263.6,720.1 235.0,686.8 241.8,707.3" fill="#80746c" stroke="#80746c" stroke-width="0.6" stroke-linejoin="round"/>
<polygon points="263.6,720.1 244.3,670.6 235.0,686.8" fill="#91847c" stroke="#91847c" stroke-width="0.6" stroke-linejoin="round"/>
<polygon points="244.3,670.6 230.5,655.0 235.0,686.8" fill="#7e726a" stroke="#7e726a" stroke-width="0.6" stroke-linejoin="round"/>
<polygon points="244.3,670.6 242.0,628.8 230.5,655.0" fill="#968a81" stroke="#968a81" stroke-width="0.6" stroke-linejoin="round"/>
<polygon points="242.0,628.8 226.0,614.0 230.5,655.0" fill="#7d7169" stroke="#7d7169" stroke-width="0.6" stroke-linejoin="round"/>
<polygon points="242.0,628.8 222.5,580.0 226.0,614.0" fill="#887c74" stroke="#887c74" stroke-width="0.6" stroke-linejoin="round"/>
<polygon points="242.0,628.8 237.0,576.4 222.5,580.0" fill="#998c83" stroke="#998c83" stroke-width="0.6" stroke-linejoin="round"/>
<polygon points="237.0,576.4 223.6,555.5 222.5,580.0" fill="#7e726a" stroke="#7e726a" stroke-width="0.6" stroke-linejoin="round"/>
<polygon points="237.0,576.4 227.0,532.7 223.6,555.5" fill="#8d8078" stroke="#8d8078" stroke-width="0.6" stroke-linejoin="round"/>
<polygon points="237.0,576.4 243.7,521.0 227.0,532.7" fill="#988c83" stroke="#988c83" stroke-width="0.6" stroke-linejoin="round"/>
<polygon points="243.7,521.0 232.7,505.5 227.0,532.7" fill="#897d74" stroke="#897d74" stroke-width="0.6" stroke-linejoin="round"/>
<polygon points="243.7,521.0 238.4,478.2 232.7,505.5" fill="#7f736b" stroke="#7f736b" stroke-width="0.6" stroke-linejoin="round"/>
<polygon points="243.7,521.0 253.9,475.0 238.4,478.2" fill="#90837b" stroke="#90837b" stroke-width="0.6" stroke-linejoin="round"/>
<polygon points="253.9,475.0 241.8,460.0 238.4,478.2" fill="#81756d" stroke="#81756d" stroke-width="0.6" stroke-linejoin="round"/>
<polygon points="253.9,475.0 245.2,441.8 241.8,460.0" fill="#897d75" stroke="#897d75" stroke-width="0.6" stroke-linejoin="round"/>
<polygon points="253.9,475.0 249.8,419.0 245.2,441.8" fill="#83776f" stroke="#83776f" stroke-width="0.6" stroke-linejoin="round"/>
<polygon points="253.9,475.0 269.4,416.3 249.8,419.0" fill="#92857d" stroke="#92857d" stroke-width="0.6" stroke-linejoin="round"/>
<polygon points="269.4,416.3 263.4,401.0 249.8,419.0" fill="#7e726a" stroke="#7e726a" stroke-width="0.6" stroke-linejoin="round"/>
<polygon points="269.4,416.3 273.6,389.5 263.4,401.0" fill="#7d7169" stroke="#7d7169" stroke-width="0.6" stroke-linejoin="round"/>
<polygon points="269.4,416.3 303.6,387.9 273.6,389.5" fill="#8c8078" stroke="#8c8078" stroke-width="0.6" stroke-linejoin="round"/>
<polygon points="303.6,387.9 305.5,374.8 273.6,389.5" fill="#796d65" stroke="#796d65" stroke-width="0.6" stroke-linejoin="round"/>
<polygon points="303.6,387.9 333.9,363.4 305.5,374.8" fill="#7f736b" stroke="#7f736b" stroke-width="0.6" stroke-linejoin="round"/>
<polygon points="303.6,387.9 359.4,366.1 333.9,363.4" fill="#857971" stroke="#857971" stroke-width="0.6" stroke-linejoin="round"/>
<polygon points="359.4,366.1 364.5,352.0 333.9,363.4" fill="#7e726a" stroke="#7e726a" stroke-width="0.6" stroke-linejoin="round"/>
<polygon points="359.4,366.1 402.9,351.1 364.5,352.0" fill="#82756d" stroke="#82756d" stroke-width="0.6" stroke-linejoin="round"/>
<polygon points="402.9,351.1 403.2,339.5 364.5,352.0" fill="#776c64" stroke="#776c64" stroke-width="0.6" stroke-linejoin="round"/>
<polygon points="402.9,351.1 438.8,340.1 403.2,339.5" fill="#81756d" stroke="#81756d" stroke-width="0.6" stroke-linejoin="round"/>
<polygon points="438.8,340.1 437.3,329.3 403.2,339.5" fill="#756a62" stroke="#756a62" stroke-width="0.6" stroke-linejoin="round"/>
<polygon points="438.8,340.1 455.5,323.2 437.3,329.3" fill="#766a62" stroke="#766a62" stroke-width="0.6" stroke-linejoin="round"/>
<polygon points="438.8,340.1 473.3,334.1 455.5,323.2" fill="#897d75" stroke="#897d75" stroke-width="0.6" stroke-linejoin="round"/>
<polygon points="473.3,334.1 482.7,323.2 455.5,323.2" fill="#796d65" stroke="#796d65" stroke-width="0.6" stroke-linejoin="round"/>
<polygon points="473.3,334.1 497.5,324.0 482.7,323.2" fill="#786c64" stroke="#786c64" stroke-width="0.6" stroke-linejoin="round"/>
<polygon points="473.3,334.1 517.7,338.3 497.5,324.0" fill="#80736b" stroke="#80736b" stroke-width="0.6" stroke-linejoin="round"/>
<polygon points="517.7,338.3 560.5,329.3 497.5,324.0" fill="#786c64" stroke="#786c64" stroke-width="0.6" stroke-linejoin="round"/>
<polygon points="517.7,338.3 566.8,345.6 560.5,329.3" fill="#84776f" stroke="#84776f" stroke-width="0.6" stroke-linejoin="round"/>
<polygon points="566.8,345.6 599.7,360.5 560.5,329.3" fill="#796d65" stroke="#796d65" stroke-width="0.6" stroke-linejoin="round"/>
<polygon points="599.7,360.5 603.6,352.0 560.5,329.3" fill="#71665e" stroke="#71665e" stroke-width="0.6" stroke-linejoin="round"/>
<polygon points="599.7,360.5 635.5,381.2 603.6,352.0" fill="#736860" stroke="#736860" stroke-width="0.6" stroke-linejoin="round"/>
<polygon points="635.5,381.2 644.5,373.6 603.6,352.0" fill="#71665e" stroke="#71665e" stroke-width="0.6" stroke-linejoin="round"/>
<polygon points="635.5,381.2 675.2,388.4 644.5,373.6" fill="#6e635b" stroke="#6e635b" stroke-width="0.6" stroke-linejoin="round"/>
<polygon points="635.5,381.2 672.6,399.8 675.2,388.4" fill="#786c64" stroke="#786c64" stroke-width="0.6" stroke-linejoin="round"/>
<polygon points="672.6,399.8 690.0,401.0 675.2,388.4" fill="#6e635b" stroke="#6e635b" stroke-width="0.6" stroke-linejoin="round"/>
<polygon points="672.6,399.8 708.2,421.4 690.0,401.0" fill="#6c6159" stroke="#6c6159" stroke-width="0.6" stroke-linejoin="round"/>
<polygon points="672.6,399.8 703.0,434.3 708.2,421.4" fill="#73675f" stroke="#73675f" stroke-width="0.6" stroke-linejoin="round"/>
<polygon points="703.0,434.3 724.0,439.5 708.2,421.4" fill="#71655d" stroke="#71655d" stroke-width="0.6" stroke-linejoin="round"/>
<polygon points="703.0,434.3 737.7,455.5 724.0,439.5" fill="#6b5f57" stroke="#6b5f57" stroke-width="0.6" stroke-linejoin="round"/>
<polygon points="703.0,434.3 728.7,465.3 737.7,455.5" fill="#756a62" stroke="#756a62" stroke-width="0.6" stroke-linejoin="round"/>
<polygon points="728.7,465.3 751.4,485.0 737.7,455.5" fill="#6b6058" stroke="#6b6058" stroke-width="0.6" stroke-linejoin="round"/>
<polygon points="728.7,465.3 747.2,501.1 751.4,485.0" fill="#72665e" stroke="#72665e" stroke-width="0.6" stroke-linejoin="round"/>
<polygon points="747.2,501.1 762.7,512.3 751.4,485.0" fill="#6c6159" stroke="#6c6159" stroke-width="0.6" stroke-linejoin="round"/>
<polygon points="747.2,501.1 768.4,537.3 762.7,512.3" fill="#70645c" stroke="#70645c" stroke-width="0.6" stroke-linejoin="round"/>
<polygon points="747.2,501.1 758.2,548.7 768.4,537.3" fill="#72675f" stroke="#72675f" stroke-width="0.6" stroke-linejoin="round"/>
<polygon points="758.2,548.7 771.8,571.4 768.4,537.3" fill="#6d6159" stroke="#6d6159" stroke-width="0.6" stroke-linejoin="round"/>
<polygon points="758.2,548.7 761.0,594.4 771.8,571.4" fill="#72675f" stroke="#72675f" stroke-width="0.6" stroke-linejoin="round"/>
<polygon points="455.5,323.2 482.7,323.2 497.5,324.0 560.5,329.3 603.6,352.0 644.5,373.6 675.2,388.4 690.0,401.0 708.2,421.4 724.0,439.5 737.7,455.5 751.4,485.0 762.7,512.3 768.4,537.3 771.8,571.4 775.2,605.5 775.2,636.8 771.8,661.8 767.3,680.0 761.6,703.9 749.0,730.0 735.5,743.6 717.3,759.5 690.0,777.7 662.7,791.4 631.0,807.3 599.0,823.2 565.0,836.8 526.4,850.5 496.8,861.8 482.7,864.1 448.6,865.2 428.2,863.0 403.2,850.5 373.6,835.7 346.4,821.0 323.6,805.0 298.6,782.3 278.2,759.5 262.3,742.5 253.2,731.1 241.8,707.3 235.0,686.8 230.5,655.0 226.0,614.0 222.5,580.0 223.6,555.5 227.0,532.7 232.7,505.5 238.4,478.2 241.8,460.0 245.2,441.8 249.8,419.0 263.4,401.0 273.6,389.5 305.5,374.8 333.9,363.4 364.5,352.0 403.2,339.5 437.3,329.3" fill="none" stroke="#2e2825" stroke-width="1.1" stroke-linejoin="round"/>
<line x1="119.50" y1="76.00" x2="119.50" y2="1073.00" stroke="#6a6a6a" stroke-width="1" stroke-dasharray="1.3 4.75"/>
<line x1="245.50" y1="76.00" x2="245.50" y2="1073.00" stroke="#6a6a6a" stroke-width="1" stroke-dasharray="1.3 4.75"/>
<line x1="371.50" y1="76.00" x2="371.50" y2="1073.00" stroke="#6a6a6a" stroke-width="1" stroke-dasharray="1.3 4.75"/>
<line x1="623.50" y1="76.00" x2="623.50" y2="1073.00" stroke="#6a6a6a" stroke-width="1" stroke-dasharray="1.3 4.75"/>
<line x1="749.50" y1="76.00" x2="749.50" y2="1073.00" stroke="#6a6a6a" stroke-width="1" stroke-dasharray="1.3 4.75"/>
<line x1="875.50" y1="76.00" x2="875.50" y2="1073.00" stroke="#6a6a6a" stroke-width="1" stroke-dasharray="1.3 4.75"/>
<line x1="0.00" y1="198.50" x2="994.00" y2="198.50" stroke="#6a6a6a" stroke-width="1" stroke-dasharray="1.3 4.75"/>
<line x1="0.00" y1="324.50" x2="994.00" y2="324.50" stroke="#6a6a6a" stroke-width="1" stroke-dasharray="1.3 4.75"/>
<line x1="0.00" y1="450.50" x2="994.00" y2="450.50" stroke="#6a6a6a" stroke-width="1" stroke-dasharray="1.3 4.75"/>
<line x1="0.00" y1="702.50" x2="994.00" y2="702.50" stroke="#6a6a6a" stroke-width="1" stroke-dasharray="1.3 4.75"/>
<line x1="0.00" y1="828.50" x2="994.00" y2="828.50" stroke="#6a6a6a" stroke-width="1" stroke-dasharray="1.3 4.75"/>
<line x1="0.00" y1="954.50" x2="994.00" y2="954.50" stroke="#6a6a6a" stroke-width="1" stroke-dasharray="1.3 4.75"/>
<defs><clipPath id="astc"><polygon points="455.5,323.2 482.7,323.2 497.5,324.0 560.5,329.3 603.6,352.0 644.5,373.6 675.2,388.4 690.0,401.0 708.2,421.4 724.0,439.5 737.7,455.5 751.4,485.0 762.7,512.3 768.4,537.3 771.8,571.4 775.2,605.5 775.2,636.8 771.8,661.8 767.3,680.0 761.6,703.9 749.0,730.0 735.5,743.6 717.3,759.5 690.0,777.7 662.7,791.4 631.0,807.3 599.0,823.2 565.0,836.8 526.4,850.5 496.8,861.8 482.7,864.1 448.6,865.2 428.2,863.0 403.2,850.5 373.6,835.7 346.4,821.0 323.6,805.0 298.6,782.3 278.2,759.5 262.3,742.5 253.2,731.1 241.8,707.3 235.0,686.8 230.5,655.0 226.0,614.0 222.5,580.0 223.6,555.5 227.0,532.7 232.7,505.5 238.4,478.2 241.8,460.0 245.2,441.8 249.8,419.0 263.4,401.0 273.6,389.5 305.5,374.8 333.9,363.4 364.5,352.0 403.2,339.5 437.3,329.3"/></clipPath></defs>
<g clip-path="url(#astc)"><line x1="497.50" y1="76.00" x2="497.50" y2="1073.00" stroke="#f0a020" stroke-width="1.2" stroke-dasharray="1.5 5.6" stroke-dashoffset="-3.2"/><line x1="0.00" y1="576.50" x2="994.00" y2="576.50" stroke="#f0a020" stroke-width="1.2" stroke-dasharray="1.5 5.6" stroke-dashoffset="-3.2"/></g>
<line x1="497.50" y1="76.00" x2="497.50" y2="1073.00" stroke="#000" stroke-width="1.2" stroke-dasharray="2.2 4.9"/>
<line x1="0.00" y1="576.50" x2="994.00" y2="576.50" stroke="#000" stroke-width="1.2" stroke-dasharray="2.2 4.9"/>
<circle cx="497.5" cy="576.5" r="246" fill="none" stroke="#ff2a2a" stroke-width="1.7" stroke-dasharray="3.5 18.5"/>
<circle cx="497.5" cy="576.5" r="246" fill="none" stroke="#d9a040" stroke-width="1.7" stroke-dasharray="3.5 18.5" stroke-dashoffset="11"/>
<circle cx="497.5" cy="576.5" r="5.5" fill="none" stroke="#555" stroke-width="1.2"/>
<circle cx="497.5" cy="576.5" r="2.3" fill="#000"/>
<line x1="491.00" y1="576.50" x2="504.00" y2="576.50" stroke="#000" stroke-width="1.5"/>
<line x1="497.50" y1="570.00" x2="497.50" y2="583.00" stroke="#000" stroke-width="1.5"/>
<line x1="0.00" y1="350.00" x2="345.00" y2="507.08" stroke="#7030a0" stroke-width="1.3"/>
<line x1="655.00" y1="648.22" x2="994.00" y2="802.57" stroke="#7030a0" stroke-width="1.3"/>
<line x1="335.07" y1="497.06" x2="330.93" y2="506.17" stroke="#7a1a8a" stroke-width="2"/>
<line x1="352.07" y1="504.80" x2="347.93" y2="513.91" stroke="#7a1a8a" stroke-width="2"/>
<line x1="333.00" y1="501.61" x2="350.00" y2="509.36" stroke="#7a1a8a" stroke-width="2"/>
<rect x="337.00" y="501.80" width="6.00" height="6.00" fill="#ff7050"/>
<line x1="645.07" y1="638.21" x2="640.93" y2="647.31" stroke="#7a1a8a" stroke-width="2"/>
<line x1="670.07" y1="649.59" x2="665.93" y2="658.69" stroke="#7a1a8a" stroke-width="2"/>
<line x1="643.00" y1="642.76" x2="668.00" y2="654.14" stroke="#7a1a8a" stroke-width="2"/>
<rect x="652.00" y="645.22" width="6.00" height="6.00" fill="#20e020"/>
<text x="342.50" y="518.00" font-family="Liberation Serif" font-size="12.00" fill="#222" xml:space="preserve">1</text>
<text x="656.50" y="661.00" font-family="Liberation Serif" font-size="12.00" fill="#222" xml:space="preserve">1</text>
<circle cx="117" cy="605.0" r="1.8" fill="#ff60c0"/>
<circle cx="245" cy="663.3" r="1.8" fill="#ff60c0"/>
<circle cx="504" cy="781.2" r="1.8" fill="#ff60c0"/>
<circle cx="633" cy="839.9" r="1.8" fill="#ff60c0"/>
<circle cx="762" cy="898.7" r="1.8" fill="#ff60c0"/>
<circle cx="891" cy="957.4" r="1.8" fill="#ff60c0"/>
<line x1="369.00" y1="722.00" x2="381.00" y2="722.00" stroke="#c040c0" stroke-width="1.2"/>
<line x1="370.76" y1="717.76" x2="379.24" y2="726.24" stroke="#c040c0" stroke-width="1.2"/>
<line x1="375.00" y1="716.00" x2="375.00" y2="728.00" stroke="#c040c0" stroke-width="1.2"/>
<line x1="379.24" y1="717.76" x2="370.76" y2="726.24" stroke="#c040c0" stroke-width="1.2"/>
<circle cx="375" cy="722" r="2.5" fill="#e060e0"/>
<text x="376.00" y="736.00" font-family="Liberation Sans" font-size="12.00" fill="#111" font-weight="bold" xml:space="preserve">2</text>
<line x1="223.00" y1="1027.50" x2="772.00" y2="1027.50" stroke="#333" stroke-width="1.3"/>
<line x1="226.50" y1="1015.00" x2="226.50" y2="1028.00" stroke="#333" stroke-width="1.3"/>
<line x1="768.50" y1="1015.00" x2="768.50" y2="1028.00" stroke="#333" stroke-width="1.3"/>
<line x1="223.00" y1="1027.00" x2="223.00" y2="1041.00" stroke="#333" stroke-width="1.3"/>
<line x1="772.00" y1="1027.00" x2="772.00" y2="1041.00" stroke="#333" stroke-width="1.3"/>
<text x="499.00" y="1024.50" font-family="Liberation Serif" font-size="13.60" fill="#111" textLength="168.79" lengthAdjust="spacingAndGlyphs" xml:space="preserve">(Volume) Mean dia = 86.0 km</text>
<text x="329.00" y="1041.00" font-family="Liberation Serif" font-size="13.60" fill="#111" textLength="167.00" lengthAdjust="spacingAndGlyphs" xml:space="preserve">(Surface) Mean dia = 87.1 km</text>
<text x="914.50" y="1056.00" font-family="Liberation Serif" font-size="14.35" fill="#111" textLength="65.51" lengthAdjust="spacingAndGlyphs" xml:space="preserve">20 km Grid</text>
<text x="858.00" y="1069.00" font-family="Liberation Serif" font-size="14.35" fill="#111" textLength="113.60" lengthAdjust="spacingAndGlyphs" xml:space="preserve">Plot width: 159 km</text>
<circle cx="15" cy="1022.5" r="6.2" fill="#ff0000"/>
<circle cx="15" cy="1040.4" r="6.2" fill="#1a9a1a"/>
<text x="29.00" y="1027.30" font-family="Liberation Serif" font-size="13.60" fill="#111" textLength="56.98" lengthAdjust="spacingAndGlyphs" xml:space="preserve">Disappear</text>
<text x="29.00" y="1044.00" font-family="Liberation Serif" font-size="13.60" fill="#111" textLength="53.51" lengthAdjust="spacingAndGlyphs" xml:space="preserve">Reappear</text>
<text x="5.50" y="1067.20" font-family="Liberation Serif" font-size="13.29" fill="#111" textLength="92.01" lengthAdjust="spacingAndGlyphs" xml:space="preserve">Occult 4.2025.9.10</text>
<text x="135.00" y="1067.20" font-family="Liberation Serif" font-size="13.29" fill="#111" textLength="70.52" lengthAdjust="spacingAndGlyphs" xml:space="preserve">Phase offset 0°</text>
<text x="1.30" y="93.00" font-family="Liberation Sans" font-size="17.44" fill="#000" font-weight="bold" textLength="119.74" lengthAdjust="spacingAndGlyphs" xml:space="preserve">(501) Urhixidur</text>
<text x="131.00" y="93.00" font-family="Liberation Sans" font-size="17.44" fill="#000" font-weight="bold" textLength="99.73" lengthAdjust="spacingAndGlyphs" xml:space="preserve">2025 Sep 14</text>
<text x="246.00" y="93.00" font-family="Liberation Sans" font-size="17.44" fill="#000" font-weight="bold" textLength="61.99" lengthAdjust="spacingAndGlyphs" xml:space="preserve">77.7 km</text>
<text x="1.30" y="114.00" font-family="Liberation Sans" font-size="17.44" fill="#000" font-weight="bold" textLength="90.19" lengthAdjust="spacingAndGlyphs" xml:space="preserve">Geocentric</text>
<text x="99.00" y="114.00" font-family="Liberation Sans" font-size="17.44" fill="#000" font-weight="bold" textLength="12.04" lengthAdjust="spacingAndGlyphs" xml:space="preserve">X</text>
<text x="119.00" y="114.00" font-family="Liberation Sans" font-size="17.44" fill="#000" font-weight="bold" textLength="103.97" lengthAdjust="spacingAndGlyphs" xml:space="preserve">-3523.0 ±0.3</text>
<text x="230.70" y="114.00" font-family="Liberation Sans" font-size="17.44" fill="#000" font-weight="bold" textLength="10.33" lengthAdjust="spacingAndGlyphs" xml:space="preserve">Y</text>
<text x="247.40" y="114.00" font-family="Liberation Sans" font-size="17.44" fill="#000" font-weight="bold" textLength="118.61" lengthAdjust="spacingAndGlyphs" xml:space="preserve">-120.2 ±0.7 km</text>
<rect x="489.00" y="94.00" width="26.00" height="25.50" fill="#fff"/>
<text x="493.00" y="119.00" font-family="Liberation Sans" font-size="30.96" fill="#000" font-weight="bold" textLength="18.66" lengthAdjust="spacingAndGlyphs" xml:space="preserve">N</text>
<rect x="4.00" y="568.00" width="27.00" height="29.00" fill="#fff"/>
<text x="8.90" y="593.90" font-family="Liberation Sans" font-size="30.96" fill="#000" textLength="18.16" lengthAdjust="spacingAndGlyphs" xml:space="preserve">E</text>
<text x="731.70" y="254.00" font-family="Liberation Sans" font-size="14.53" fill="#2b2b8c" textLength="93.28" lengthAdjust="spacingAndGlyphs" xml:space="preserve">(501) Urhixidur</text>
<text x="739.30" y="272.70" font-family="Liberation Sans" font-size="14.53" fill="#2b2b8c" textLength="83.42" lengthAdjust="spacingAndGlyphs" xml:space="preserve">DAMIT #6216</text>
<text x="761.00" y="290.00" font-family="Liberation Sans" font-size="14.53" fill="#2b2b8c" textLength="62.97" lengthAdjust="spacingAndGlyphs" xml:space="preserve">Sky Plane</text>
</svg>
<rect x="3.80" y="214.50" width="118.70" height="52.50" fill="#b0c4de" stroke="#5c5c5c" stroke-width="1.4"/>
<rect x="5.00" y="219.00" width="68.00" height="16.00" fill="#f0ffff"/>
<text x="8.00" y="232.70" font-family="Liberation Sans" font-size="15.99" fill="#000" textLength="59.29" lengthAdjust="spacingAndGlyphs" xml:space="preserve">Grid angle</text>
<rect x="96.50" y="218.50" width="17.00" height="16.00" fill="#fefefe" rx="3"/>
<path d="M100.5,221.5 L111,231.5 M111,221.5 L100.5,231.5" stroke="#d00000" stroke-width="2.2"/>
<rect x="9.00" y="237.60" width="57.00" height="24.40" fill="#fcfcfc"/>
<text x="13.00" y="255.50" font-family="Liberation Sans" font-size="15.26" fill="#000" textLength="7.82" lengthAdjust="spacingAndGlyphs" xml:space="preserve">0</text>
<path d="M50,248 L55.5,253 L61,248" fill="none" stroke="#555" stroke-width="1.1"/>
<rect x="73.00" y="239.00" width="19.50" height="20.00" fill="#fdfdfd" rx="3"/>
<rect x="75.60" y="241.60" width="15.40" height="14.40" fill="#7cfc00"/>
<path d="M78.5,251.5 h7.5 M82.25,247.5 v8" stroke="#111" stroke-width="2"/>
<rect x="97.00" y="238.00" width="19.50" height="19.50" fill="#fdfdfd" rx="3"/>
<rect x="99.00" y="240.00" width="15.50" height="15.00" fill="#f08080"/>
<line x1="103.00" y1="249.50" x2="108.50" y2="249.50" stroke="#111" stroke-width="1.8"/>
<rect x="1021.50" y="80.50" width="428.00" height="992.50" fill="none" stroke="#dadada" stroke-width="1"/>
<rect x="1027.00" y="75.00" width="75.00" height="11.00" fill="#f0f0f0"/>
<text x="1031.80" y="86.50" font-family="Liberation Sans" font-size="15.70" fill="#000" textLength="66.19" lengthAdjust="spacingAndGlyphs" xml:space="preserve">Find best fit</text>
<defs><linearGradient id="cbg" x1="0" x2="0" y1="0" y2="1"><stop offset="0" stop-color="#d2d2d2"/><stop offset="1" stop-color="#b4b4b4"/></linearGradient></defs>
<rect x="1032.00" y="95.00" width="40.00" height="40.00" fill="#8c8c8c"/>
<rect x="1033.00" y="96.00" width="36.00" height="36.00" fill="#ffffff"/>
<rect x="1035.00" y="98.00" width="34.00" height="34.00" fill="url(#cbg)"/>
<rect x="1038.00" y="105.50" width="1.00" height="1.00" fill="#111"/>
<rect x="1038.00" y="110.50" width="1.00" height="1.00" fill="#111"/>
<rect x="1038.00" y="115.50" width="1.00" height="1.00" fill="#111"/>
<rect x="1038.00" y="120.50" width="1.00" height="1.00" fill="#111"/>
<rect x="1038.00" y="125.50" width="1.00" height="1.00" fill="#111"/>
<rect x="1038.00" y="126.00" width="1.00" height="1.00" fill="#111"/>
<rect x="1043.00" y="126.00" width="1.00" height="1.00" fill="#111"/>
<rect x="1048.00" y="126.00" width="1.00" height="1.00" fill="#111"/>
<rect x="1053.00" y="126.00" width="1.00" height="1.00" fill="#111"/>
<rect x="1058.00" y="126.00" width="1.00" height="1.00" fill="#111"/>
<rect x="1063.00" y="126.00" width="1.00" height="1.00" fill="#111"/>
<path d="M1044,120 L1049,115 L1054,120 L1059,115 L1064,110" fill="none" stroke="#111" stroke-width="1"/>
<circle cx="1044" cy="120" r="1.2" fill="#111"/>
<circle cx="1049" cy="115" r="1.2" fill="#111"/>
<circle cx="1054" cy="120" r="1.2" fill="#111"/>
<circle cx="1059" cy="115" r="1.2" fill="#111"/>
<circle cx="1064" cy="110" r="1.2" fill="#111"/>
<text x="1097.50" y="105.00" font-family="Liberation Sans" font-size="15.41" fill="#000" textLength="51.52" lengthAdjust="spacingAndGlyphs" xml:space="preserve">Center X</text>
<text x="1097.50" y="132.50" font-family="Liberation Sans" font-size="15.41" fill="#000" textLength="51.48" lengthAdjust="spacingAndGlyphs" xml:space="preserve">Center Y</text>
<text x="1061.00" y="166.40" font-family="Liberation Sans" font-size="15.41" fill="#000" textLength="87.98" lengthAdjust="spacingAndGlyphs" xml:space="preserve">Major axis (km)</text>
<text x="1061.00" y="193.60" font-family="Liberation Sans" font-size="15.41" fill="#000" textLength="87.98" lengthAdjust="spacingAndGlyphs" xml:space="preserve">Minor axis (km)</text>
<text x="1085.50" y="220.60" font-family="Liberation Sans" font-size="15.41" fill="#000" textLength="62.52" lengthAdjust="spacingAndGlyphs" xml:space="preserve">Orientation</text>
<rect x="1157.50" y="87.50" width="71.00" height="23.00" fill="#fff" stroke="#a9abb2" stroke-width="1.2"/>
<rect x="1209.50" y="89.00" width="16.50" height="20.00" fill="#f7f7f7"/>
<line x1="1209.50" y1="99.00" x2="1226.00" y2="99.00" stroke="#cfcfcf" stroke-width="1.4"/>
<path d="M1213.9,95.8 L1217.5,91.8 L1221.1,95.8Z M1213.9,102.2 L1217.5,106.2 L1221.1,102.2Z" fill="#111"/>
<text x="1158.80" y="102.60" font-family="Liberation Sans" font-size="15.84" fill="#000" textLength="19.20" lengthAdjust="spacingAndGlyphs" xml:space="preserve">0.0</text>
<rect x="1157.50" y="115.00" width="71.00" height="23.00" fill="#fff" stroke="#a9abb2" stroke-width="1.2"/>
<rect x="1209.50" y="116.50" width="16.50" height="20.00" fill="#f7f7f7"/>
<line x1="1209.50" y1="126.50" x2="1226.00" y2="126.50" stroke="#cfcfcf" stroke-width="1.4"/>
<path d="M1213.9,123.3 L1217.5,119.3 L1221.1,123.3Z M1213.9,129.7 L1217.5,133.7 L1221.1,129.7Z" fill="#111"/>
<text x="1158.80" y="130.10" font-family="Liberation Sans" font-size="15.84" fill="#000" textLength="19.20" lengthAdjust="spacingAndGlyphs" xml:space="preserve">0.0</text>
<rect x="1157.50" y="148.50" width="71.00" height="23.50" fill="#f0f0f0" stroke="#b0b2b8" stroke-width="1.2"/>
<rect x="1209.50" y="150.00" width="16.50" height="20.50" fill="#f7f7f7"/>
<line x1="1209.50" y1="160.25" x2="1226.00" y2="160.25" stroke="#cfcfcf" stroke-width="1.4"/>
<path d="M1213.9,157.05 L1217.5,153.05 L1221.1,157.05Z M1213.9,163.45 L1217.5,167.45 L1221.1,163.45Z" fill="#a8a8a8"/>
<text x="1160.50" y="163.60" font-family="Liberation Sans" font-size="15.84" fill="#8c8c8c" textLength="25.52" lengthAdjust="spacingAndGlyphs" xml:space="preserve">77.7</text>
<rect x="1157.50" y="175.50" width="71.00" height="23.50" fill="#f0f0f0" stroke="#b0b2b8" stroke-width="1.2"/>
<rect x="1209.50" y="177.00" width="16.50" height="20.50" fill="#f7f7f7"/>
<line x1="1209.50" y1="187.25" x2="1226.00" y2="187.25" stroke="#cfcfcf" stroke-width="1.4"/>
<path d="M1213.9,184.05 L1217.5,180.05 L1221.1,184.05Z M1213.9,190.45 L1217.5,194.45 L1221.1,190.45Z" fill="#a8a8a8"/>
<text x="1160.50" y="190.60" font-family="Liberation Sans" font-size="15.84" fill="#8c8c8c" textLength="25.52" lengthAdjust="spacingAndGlyphs" xml:space="preserve">77.7</text>
<rect x="1157.50" y="202.50" width="71.00" height="23.50" fill="#f0f0f0" stroke="#b0b2b8" stroke-width="1.2"/>
<rect x="1209.50" y="204.00" width="16.50" height="20.50" fill="#f7f7f7"/>
<line x1="1209.50" y1="214.25" x2="1226.00" y2="214.25" stroke="#cfcfcf" stroke-width="1.4"/>
<path d="M1213.9,211.05 L1217.5,207.05 L1221.1,211.05Z M1213.9,217.45 L1217.5,221.45 L1221.1,217.45Z" fill="#a8a8a8"/>
<text x="1158.80" y="217.60" font-family="Liberation Sans" font-size="15.84" fill="#8c8c8c" textLength="19.20" lengthAdjust="spacingAndGlyphs" xml:space="preserve">0.0</text>
<rect x="1244.30" y="90.30" width="16.00" height="16.00" fill="#0067c0" rx="3"/>
<path d="M1248.3,98.8 L1251.1,101.5 L1256.3,95.8" fill="none" stroke="#fff" stroke-width="1.3"/>
<rect x="1244.30" y="117.50" width="16.00" height="16.00" fill="#0067c0" rx="3"/>
<path d="M1248.3,126.0 L1251.1,128.7 L1256.3,123.0" fill="none" stroke="#fff" stroke-width="1.3"/>
<line x1="1268.00" y1="99.50" x2="1279.50" y2="99.50" stroke="#222" stroke-width="1.2" stroke-dasharray="3.2 1"/>
<line x1="1268.00" y1="126.80" x2="1279.50" y2="126.80" stroke="#222" stroke-width="1.2" stroke-dasharray="3.2 1"/>
<rect x="1244.80" y="152.00" width="15.00" height="15.00" fill="#fbfbfb" stroke="#cccccc" stroke-width="1" rx="3"/>
<rect x="1244.80" y="179.30" width="15.00" height="15.00" fill="#fbfbfb" stroke="#cccccc" stroke-width="1" rx="3"/>
<rect x="1244.80" y="207.20" width="15.00" height="15.00" fill="#fbfbfb" stroke="#cccccc" stroke-width="1" rx="3"/>
<text x="1268.00" y="164.80" font-family="Liberation Sans" font-size="14.97" fill="#a0a0a0" textLength="18.00" lengthAdjust="spacingAndGlyphs" xml:space="preserve">0.0</text>
<text x="1268.00" y="192.20" font-family="Liberation Sans" font-size="14.97" fill="#a0a0a0" textLength="18.00" lengthAdjust="spacingAndGlyphs" xml:space="preserve">0.0</text>
<text x="1268.00" y="219.80" font-family="Liberation Sans" font-size="14.97" fill="#a0a0a0" textLength="18.00" lengthAdjust="spacingAndGlyphs" xml:space="preserve">0.0</text>
<text x="1320.70" y="105.50" font-family="Liberation Sans" font-size="15.12" fill="#000" textLength="43.29" lengthAdjust="spacingAndGlyphs" xml:space="preserve">Mass X</text>
<text x="1320.70" y="133.00" font-family="Liberation Sans" font-size="15.12" fill="#000" textLength="43.31" lengthAdjust="spacingAndGlyphs" xml:space="preserve">Mass Y</text>
<rect x="1372.50" y="87.20" width="71.00" height="23.30" fill="#fff" stroke="#a9abb2" stroke-width="1.2"/>
<rect x="1424.50" y="88.70" width="16.50" height="20.30" fill="#f7f7f7"/>
<line x1="1424.50" y1="98.85" x2="1441.00" y2="98.85" stroke="#cfcfcf" stroke-width="1.4"/>
<path d="M1428.9,95.64999999999999 L1432.5,91.64999999999999 L1436.1,95.64999999999999Z M1428.9,102.05 L1432.5,106.05 L1436.1,102.05Z" fill="#111"/>
<text x="1373.80" y="102.30" font-family="Liberation Sans" font-size="15.84" fill="#000" textLength="19.20" lengthAdjust="spacingAndGlyphs" xml:space="preserve">0.0</text>
<rect x="1372.50" y="115.00" width="71.00" height="23.00" fill="#fff" stroke="#a9abb2" stroke-width="1.2"/>
<rect x="1424.50" y="116.50" width="16.50" height="20.00" fill="#f7f7f7"/>
<line x1="1424.50" y1="126.50" x2="1441.00" y2="126.50" stroke="#cfcfcf" stroke-width="1.4"/>
<path d="M1428.9,123.3 L1432.5,119.3 L1436.1,123.3Z M1428.9,129.7 L1432.5,133.7 L1436.1,129.7Z" fill="#111"/>
<text x="1373.80" y="130.10" font-family="Liberation Sans" font-size="15.84" fill="#000" textLength="19.20" lengthAdjust="spacingAndGlyphs" xml:space="preserve">0.0</text>
<text x="1362.00" y="149.30" font-family="Liberation Sans" font-size="9.59" fill="#bdbdbd" textLength="54.68" lengthAdjust="spacingAndGlyphs" xml:space="preserve">Shape model</text>
<rect x="1426.50" y="140.30" width="15.00" height="14.20" fill="#fbfbfb" stroke="#c8c8c8" stroke-width="1" rx="3"/>
<text x="1339.00" y="170.30" font-family="Liberation Sans" font-size="13.52" fill="#2f9a2f" textLength="79.02" lengthAdjust="spacingAndGlyphs" xml:space="preserve">dia = 77.7 km</text>
<text x="1315.50" y="188.00" font-family="Liberation Sans" font-size="15.12" fill="#3a3af0" textLength="127.22" lengthAdjust="spacingAndGlyphs" xml:space="preserve">a/b: 1.00, dMag: 0.00</text>
<text x="1321.00" y="224.80" font-family="Liberation Sans" font-size="14.39" fill="#000" textLength="103.03" lengthAdjust="spacingAndGlyphs" xml:space="preserve">Motion: 3.00 km/s</text>
<rect x="1037.00" y="240.20" width="16.00" height="16.00" fill="#0067c0" rx="3"/>
<path d="M1041,248.7 L1043.8,251.39999999999998 L1049,245.7" fill="none" stroke="#fff" stroke-width="1.3"/>
<text x="1059.80" y="253.40" font-family="Liberation Sans" font-size="15.12" fill="#000" textLength="44.10" lengthAdjust="spacingAndGlyphs" xml:space="preserve">Circular</text>
<rect x="1119.40" y="240.20" width="16.00" height="16.00" fill="#0067c0" rx="3"/>
<path d="M1123.4,248.7 L1126.2,251.39999999999998 L1131.4,245.7" fill="none" stroke="#fff" stroke-width="1.3"/>
<text x="1143.30" y="244.60" font-family="Liberation Sans" font-size="13.95" fill="#000" textLength="77.69" lengthAdjust="spacingAndGlyphs" xml:space="preserve">Use assumed</text>
<text x="1143.30" y="261.20" font-family="Liberation Sans" font-size="13.95" fill="#000" textLength="74.71" lengthAdjust="spacingAndGlyphs" xml:space="preserve">dia (77.7 km)</text>
<rect x="1247.50" y="240.30" width="15.00" height="15.00" fill="#ffffff" stroke="#333" stroke-width="1" rx="3"/>
<text x="1270.70" y="254.70" font-family="Liberation Sans" font-size="15.41" fill="#000" textLength="116.72" lengthAdjust="spacingAndGlyphs" xml:space="preserve">Include Miss events</text>
<rect x="1034.30" y="273.00" width="403.10" height="26.40" fill="#ffffff"/>
<rect x="1034.30" y="273.00" width="402.10" height="25.40" fill="#6a6a6a"/>
<rect x="1036.30" y="275.00" width="400.10" height="23.40" fill="#f0f0f0"/>
<text x="1044.70" y="290.80" font-family="Liberation Sans" font-size="15.12" fill="#a6a6a6" font-weight="bold" textLength="138.55" lengthAdjust="spacingAndGlyphs" xml:space="preserve">Double stars - show</text>
<circle cx="1210" cy="287" r="6.7" fill="#c4c4c4"/><circle cx="1210" cy="287" r="2.6" fill="#fff"/>
<circle cx="1275" cy="287" r="7.3" fill="#fafafa" stroke="#c9c9c9" stroke-width="1"/>
<circle cx="1356" cy="287" r="7.3" fill="#fafafa" stroke="#c9c9c9" stroke-width="1"/>
<text x="1224.00" y="293.00" font-family="Liberation Sans" font-size="12.65" fill="#b4b4b4" textLength="23.32" lengthAdjust="spacingAndGlyphs" xml:space="preserve">Both</text>
<text x="1289.00" y="293.00" font-family="Liberation Sans" font-size="12.65" fill="#b4b4b4" textLength="39.39" lengthAdjust="spacingAndGlyphs" xml:space="preserve">Primary</text>
<text x="1370.20" y="293.00" font-family="Liberation Sans" font-size="12.65" fill="#b4b4b4" textLength="54.31" lengthAdjust="spacingAndGlyphs" xml:space="preserve">Secondary</text>
<text x="1034.90" y="325.00" font-family="Liberation Sans" font-size="15.99" fill="#006a00" font-weight="bold" textLength="113.62" lengthAdjust="spacingAndGlyphs" xml:space="preserve">Quality of the fit</text>
<rect x="1160.90" y="307.40" width="266.80" height="24.90" fill="#fff" stroke="#8a8a8a" stroke-width="1" rx="2"/>
<text x="1165.00" y="324.20" font-family="Liberation Sans" font-size="15.41" fill="#000" textLength="182.79" lengthAdjust="spacingAndGlyphs" xml:space="preserve">Astrometry only. No reliable size</text>
<path d="M1411.6,317.6 L1416.7,323 L1421.8,317.6" fill="none" stroke="#444" stroke-width="1.1"/>
<rect x="1160.40" y="336.40" width="156.10" height="21.00" fill="#add8e6"/>
<rect x="1161.00" y="338.00" width="15.50" height="15.60" fill="#fff" stroke="#333" stroke-width="1" rx="3"/>
<text x="1185.80" y="350.90" font-family="Liberation Sans" font-size="14.83" fill="#000" font-style="italic" textLength="121.76" lengthAdjust="spacingAndGlyphs" xml:space="preserve">Flag for future review</text>
<rect x="1023.30" y="361.60" width="423.20" height="102.70" fill="#ffffff"/>
<rect x="1023.30" y="361.60" width="422.20" height="101.70" fill="#696969"/>
<rect x="1025.30" y="363.60" width="420.20" height="99.70" fill="#f0ffff"/>
<text x="1033.70" y="394.70" font-family="Liberation Sans" font-size="15.70" fill="#7d0040" font-weight="bold" xml:space="preserve">P</text>
<text x="1033.70" y="411.20" font-family="Liberation Sans" font-size="15.70" fill="#7d0040" font-weight="bold" xml:space="preserve">L</text>
<text x="1033.70" y="427.80" font-family="Liberation Sans" font-size="15.70" fill="#7d0040" font-weight="bold" xml:space="preserve">O</text>
<text x="1033.70" y="443.40" font-family="Liberation Sans" font-size="15.70" fill="#7d0040" font-weight="bold" xml:space="preserve">T</text>
<text x="1058.80" y="390.00" font-family="Liberation Sans" font-size="15.99" fill="#7d0040" font-weight="bold" textLength="38.68" lengthAdjust="spacingAndGlyphs" xml:space="preserve">Scale</text>
<rect x="1107.00" y="372.60" width="336.00" height="23.60" fill="#fff8d2"/>
<rect x="1113.00" y="379.40" width="322.00" height="4.20" fill="#e6e7e8" stroke="#d4d4d4" stroke-width="0.8"/>
<line x1="1117.40" y1="392.00" x2="1117.40" y2="395.60" stroke="#8a8a8a" stroke-width="1"/>
<line x1="1133.13" y1="392.00" x2="1133.13" y2="395.60" stroke="#8a8a8a" stroke-width="1"/>
<line x1="1148.86" y1="392.00" x2="1148.86" y2="395.60" stroke="#8a8a8a" stroke-width="1"/>
<line x1="1164.59" y1="392.00" x2="1164.59" y2="395.60" stroke="#8a8a8a" stroke-width="1"/>
<line x1="1180.32" y1="392.00" x2="1180.32" y2="395.60" stroke="#8a8a8a" stroke-width="1"/>
<line x1="1196.05" y1="392.00" x2="1196.05" y2="395.60" stroke="#8a8a8a" stroke-width="1"/>
<line x1="1211.78" y1="392.00" x2="1211.78" y2="395.60" stroke="#8a8a8a" stroke-width="1"/>
<line x1="1227.51" y1="392.00" x2="1227.51" y2="395.60" stroke="#8a8a8a" stroke-width="1"/>
<line x1="1243.24" y1="392.00" x2="1243.24" y2="395.60" stroke="#8a8a8a" stroke-width="1"/>
<line x1="1258.97" y1="392.00" x2="1258.97" y2="395.60" stroke="#8a8a8a" stroke-width="1"/>
<line x1="1274.70" y1="392.00" x2="1274.70" y2="395.60" stroke="#8a8a8a" stroke-width="1"/>
<line x1="1290.43" y1="392.00" x2="1290.43" y2="395.60" stroke="#8a8a8a" stroke-width="1"/>
<line x1="1306.16" y1="392.00" x2="1306.16" y2="395.60" stroke="#8a8a8a" stroke-width="1"/>
<line x1="1321.89" y1="392.00" x2="1321.89" y2="395.60" stroke="#8a8a8a" stroke-width="1"/>
<line x1="1337.62" y1="392.00" x2="1337.62" y2="395.60" stroke="#8a8a8a" stroke-width="1"/>
<line x1="1353.35" y1="392.00" x2="1353.35" y2="395.60" stroke="#8a8a8a" stroke-width="1"/>
<line x1="1369.08" y1="392.00" x2="1369.08" y2="395.60" stroke="#8a8a8a" stroke-width="1"/>
<line x1="1384.81" y1="392.00" x2="1384.81" y2="395.60" stroke="#8a8a8a" stroke-width="1"/>
<line x1="1400.54" y1="392.00" x2="1400.54" y2="395.60" stroke="#8a8a8a" stroke-width="1"/>
<line x1="1416.27" y1="392.00" x2="1416.27" y2="395.60" stroke="#8a8a8a" stroke-width="1"/>
<line x1="1432.00" y1="392.00" x2="1432.00" y2="395.60" stroke="#8a8a8a" stroke-width="1"/>
<path d="M1259,376.4 h8 v8 l-4,3.6 l-4,-3.6z" fill="#0a6fd6"/>
<text x="1058.80" y="422.60" font-family="Liberation Sans" font-size="15.84" fill="#7d0040" font-weight="bold" textLength="28.81" lengthAdjust="spacingAndGlyphs" xml:space="preserve">Size</text>
<rect x="1096.00" y="404.00" width="203.00" height="28.50" fill="#ffffff"/>
<rect x="1096.00" y="404.00" width="202.00" height="27.50" fill="#6a6a6a"/>
<rect x="1098.00" y="406.00" width="200.00" height="25.50" fill="#f0fff0"/>
<circle cx="1116" cy="418.3" r="8" fill="#0063c0"/><circle cx="1116" cy="418.3" r="3.4" fill="#fff"/>
<circle cx="1196" cy="418.3" r="7.4" fill="#f5f5f5" stroke="#333" stroke-width="1"/>
<circle cx="1251" cy="418.3" r="7.4" fill="#f5f5f5" stroke="#333" stroke-width="1"/>
<text x="1131.50" y="423.50" font-family="Liberation Sans" font-size="14.50" fill="#6c0038" font-weight="bold" textLength="45.49" lengthAdjust="spacingAndGlyphs" xml:space="preserve">normal</text>
<text x="1211.00" y="423.50" font-family="Liberation Sans" font-size="15.70" fill="#6c0038" font-weight="bold" textLength="22.00" lengthAdjust="spacingAndGlyphs" xml:space="preserve">x 2</text>
<text x="1266.00" y="423.50" font-family="Liberation Sans" font-size="15.70" fill="#6c0038" font-weight="bold" textLength="22.00" lengthAdjust="spacingAndGlyphs" xml:space="preserve">x 5</text>
<text x="1327.80" y="423.70" font-family="Liberation Sans" font-size="15.99" fill="#8b008b" font-weight="bold" textLength="88.18" lengthAdjust="spacingAndGlyphs" xml:space="preserve">Form opacity</text>
<rect x="1301.00" y="433.00" width="143.00" height="26.00" fill="#fff8d2"/>
<rect x="1308.00" y="440.00" width="127.50" height="4.20" fill="#e6e7e8" stroke="#d4d4d4" stroke-width="0.8"/>
<line x1="1313.50" y1="454.00" x2="1313.50" y2="458.00" stroke="#8a8a8a" stroke-width="1"/>
<line x1="1337.40" y1="454.00" x2="1337.40" y2="458.00" stroke="#8a8a8a" stroke-width="1"/>
<line x1="1361.00" y1="454.00" x2="1361.00" y2="458.00" stroke="#8a8a8a" stroke-width="1"/>
<line x1="1383.50" y1="454.00" x2="1383.50" y2="458.00" stroke="#8a8a8a" stroke-width="1"/>
<line x1="1407.00" y1="454.00" x2="1407.00" y2="458.00" stroke="#8a8a8a" stroke-width="1"/>
<line x1="1431.00" y1="454.00" x2="1431.00" y2="458.00" stroke="#8a8a8a" stroke-width="1"/>
<path d="M1425,435 h10.5 v12 l-5.25,4 l-5.25,-4z" fill="#0a6fd6"/>
<text x="1060.00" y="454.70" font-family="Liberation Sans" font-size="15.99" fill="#880000" font-weight="bold" textLength="128.20" lengthAdjust="spacingAndGlyphs" xml:space="preserve">Scroll range x1.25</text>
<rect x="1198.50" y="442.00" width="15.30" height="15.50" fill="#f8f8f8" stroke="#444" stroke-width="1" rx="3"/>
<text x="1040.30" y="491.20" font-family="Liberation Sans" font-size="15.70" fill="#000" textLength="127.88" lengthAdjust="spacingAndGlyphs" xml:space="preserve">RMS fit -11.4 ±0.0 km</text>
<rect x="1031.00" y="503.00" width="408.50" height="545.80" fill="#ffffff"/>
<rect x="1031.00" y="503.00" width="407.50" height="544.80" fill="#6a6a6a"/>
<rect x="1033.00" y="505.00" width="405.50" height="542.80" fill="#ffffff"/>
<line x1="1039.30" y1="513.70" x2="1121.80" y2="513.70" stroke="#4b0082" stroke-width="2.6"/>
<circle cx="1042.5" cy="529.6" r="2" fill="none" stroke="#333" stroke-width="1.1"/>
<circle cx="1061" cy="529.6" r="2" fill="none" stroke="#333" stroke-width="1.1"/>
<circle cx="1079.8" cy="529.6" r="2" fill="none" stroke="#333" stroke-width="1.1"/>
<circle cx="1098.6" cy="529.6" r="2" fill="none" stroke="#333" stroke-width="1.1"/>
<circle cx="1117.3" cy="529.6" r="2" fill="none" stroke="#333" stroke-width="1.1"/>
<svg x="1033" y="505" width="405" height="540" viewBox="1033 505 405 540">
<text x="1151.00" y="520.00" font-family="Liberation Mono" font-size="17.10" fill="#000" xml:space="preserve">1</text>
<text x="1202.30" y="520.00" font-family="Liberation Mono" font-size="17.10" fill="#000" xml:space="preserve">Toshihiro Horikawa, near</text>
<text x="1151.00" y="534.70" font-family="Liberation Mono" font-size="17.10" fill="#000" xml:space="preserve">2(P) Predicted</text>
</svg>
<rect x="1033.00" y="1030.00" width="405.50" height="17.80" fill="#f0f0f0"/>
<path d="M1039.2,1037.2 L1046.6,1032 L1046.6,1042.5Z" fill="#8a8a8a"/>
<path d="M1432.4,1037.2 L1424.8,1032 L1424.8,1042.5Z" fill="#8a8a8a"/>
<rect x="1054.30" y="1034.00" width="234.70" height="7.00" fill="#858585" rx="3.5"/>
<rect x="1008.30" y="866.60" width="561.40" height="165.00" fill="#b0c4de" stroke="#7c7c7c" stroke-width="1.5"/>
<text x="1011.70" y="888.80" font-family="Liberation Sans" font-size="15.84" fill="#1e3a6e" font-weight="bold" textLength="46.92" lengthAdjust="spacingAndGlyphs" xml:space="preserve">DAMIT</text>
<rect x="1066.60" y="871.20" width="17.50" height="21.40" fill="#fafafa" rx="4"/>
<rect x="1069.00" y="874.00" width="12.60" height="15.60" fill="#00ff00"/>
<text x="1075.30" y="885.60" font-family="Liberation Sans" font-size="15.26" fill="#000" font-weight="bold" text-anchor="middle" xml:space="preserve">1</text>
<rect x="1088.80" y="871.20" width="18.00" height="21.40" fill="#fafafa" rx="4"/>
<rect x="1091.70" y="874.00" width="12.10" height="15.60" fill="#66cdaa"/>
<text x="1097.75" y="885.60" font-family="Liberation Sans" font-size="15.26" fill="#000" font-weight="bold" text-anchor="middle" xml:space="preserve">2</text>
<rect x="1111.00" y="870.50" width="18.40" height="22.50" fill="#f8f8f8" rx="4"/>
<rect x="1113.00" y="873.00" width="14.40" height="17.50" fill="#efefef"/>
<text x="1120.20" y="886.50" font-family="Liberation Sans" font-size="14.53" fill="#a4a4a4" text-anchor="middle" xml:space="preserve">3</text>
<rect x="1133.00" y="870.50" width="19.00" height="22.50" fill="#f8f8f8" rx="4"/>
<rect x="1135.00" y="873.00" width="15.00" height="17.50" fill="#efefef"/>
<text x="1142.50" y="886.50" font-family="Liberation Sans" font-size="14.53" fill="#a4a4a4" text-anchor="middle" xml:space="preserve">4</text>
<rect x="1155.80" y="870.50" width="18.20" height="22.50" fill="#f8f8f8" rx="4"/>
<rect x="1157.80" y="873.00" width="14.20" height="17.50" fill="#efefef"/>
<text x="1164.90" y="886.50" font-family="Liberation Sans" font-size="14.53" fill="#a4a4a4" text-anchor="middle" xml:space="preserve">5</text>
<rect x="1178.00" y="870.50" width="18.80" height="22.50" fill="#f8f8f8" rx="4"/>
<rect x="1180.00" y="873.00" width="14.80" height="17.50" fill="#efefef"/>
<text x="1187.40" y="886.50" font-family="Liberation Sans" font-size="14.53" fill="#a4a4a4" text-anchor="middle" xml:space="preserve">6</text>
<rect x="1205.30" y="871.00" width="87.20" height="22.40" fill="#fafafa" rx="4"/>
<rect x="1208.00" y="874.00" width="82.40" height="17.20" fill="#afeeee"/>
<text x="1212.20" y="887.80" font-family="Liberation Sans" font-size="14.97" fill="#000" textLength="70.82" lengthAdjust="spacingAndGlyphs" xml:space="preserve">Light curves</text>
<text x="1301.60" y="888.60" font-family="Liberation Sans" font-size="15.84" fill="#1e3a6e" font-weight="bold" textLength="36.00" lengthAdjust="spacingAndGlyphs" xml:space="preserve">ISAM</text>
<rect x="1345.80" y="870.30" width="18.90" height="22.70" fill="#f8f8f8" rx="4"/>
<rect x="1347.80" y="873.00" width="14.90" height="17.50" fill="#efefef"/>
<text x="1355.25" y="886.50" font-family="Liberation Sans" font-size="14.53" fill="#a4a4a4" text-anchor="middle" xml:space="preserve">1</text>
<rect x="1375.70" y="870.30" width="18.90" height="22.70" fill="#f8f8f8" rx="4"/>
<rect x="1377.70" y="873.00" width="14.90" height="17.50" fill="#efefef"/>
<text x="1385.15" y="886.50" font-family="Liberation Sans" font-size="14.53" fill="#a4a4a4" text-anchor="middle" xml:space="preserve">2</text>
<rect x="1405.70" y="870.30" width="18.90" height="22.70" fill="#f8f8f8" rx="4"/>
<rect x="1407.70" y="873.00" width="14.90" height="17.50" fill="#efefef"/>
<text x="1415.15" y="886.50" font-family="Liberation Sans" font-size="14.53" fill="#a4a4a4" text-anchor="middle" xml:space="preserve">3</text>
<rect x="1435.70" y="870.30" width="18.90" height="22.70" fill="#f8f8f8" rx="4"/>
<rect x="1437.70" y="873.00" width="14.90" height="17.50" fill="#efefef"/>
<text x="1445.15" y="886.50" font-family="Liberation Sans" font-size="14.53" fill="#a4a4a4" text-anchor="middle" xml:space="preserve">4</text>
<rect x="1465.70" y="870.30" width="19.00" height="22.70" fill="#f8f8f8" rx="4"/>
<rect x="1467.70" y="873.00" width="15.00" height="17.50" fill="#efefef"/>
<text x="1475.20" y="886.50" font-family="Liberation Sans" font-size="14.53" fill="#a4a4a4" text-anchor="middle" xml:space="preserve">5</text>
<rect x="1495.70" y="870.30" width="19.00" height="22.70" fill="#f8f8f8" rx="4"/>
<rect x="1497.70" y="873.00" width="15.00" height="17.50" fill="#efefef"/>
<text x="1505.20" y="886.50" font-family="Liberation Sans" font-size="14.53" fill="#a4a4a4" text-anchor="middle" xml:space="preserve">6</text>
<rect x="1527.00" y="870.50" width="16.70" height="20.50" fill="#fafafa" rx="3"/>
<rect x="1529.00" y="872.60" width="12.40" height="16.20" fill="#3636c8"/>
<text x="1535.20" y="886.50" font-family="Liberation Sans" font-size="15.99" fill="#ffee00" font-weight="bold" text-anchor="middle" xml:space="preserve">?</text>
<rect x="1547.40" y="870.50" width="17.10" height="20.50" fill="#fafafa" rx="3"/>
<rect x="1548.80" y="872.60" width="14.20" height="16.20" fill="#dc143c"/>
<text x="1555.90" y="886.50" font-family="Liberation Sans" font-size="15.99" fill="#fff" text-anchor="middle" xml:space="preserve">X</text>
<text x="1018.40" y="908.50" font-family="Liberation Sans" font-size="15.26" fill="#3b4a6b" textLength="40.98" lengthAdjust="spacingAndGlyphs" xml:space="preserve">Source</text>
<text x="1091.70" y="908.50" font-family="Liberation Sans" font-size="15.26" fill="#3b4a6b" textLength="13.00" lengthAdjust="spacingAndGlyphs" xml:space="preserve">ID</text>
<text x="1134.40" y="908.50" font-family="Liberation Sans" font-size="15.26" fill="#3b4a6b" textLength="47.33" lengthAdjust="spacingAndGlyphs" xml:space="preserve">Surf/Vol</text>
<rect x="1014.60" y="913.00" width="48.60" height="22.70" fill="#fbfbfb" rx="2"/>
<rect x="1016.10" y="914.50" width="46.10" height="19.70" fill="#f0f0f0"/>
<line x1="1015.60" y1="934.90" x2="1062.70" y2="934.90" stroke="#707070" stroke-width="1.6"/>
<text x="1018.80" y="930.30" font-family="Liberation Sans" font-size="15.26" fill="#000" textLength="39.01" lengthAdjust="spacingAndGlyphs" xml:space="preserve">DAMIT</text>
<rect x="1066.00" y="913.00" width="66.30" height="22.70" fill="#fbfbfb" rx="2"/>
<rect x="1067.50" y="914.50" width="63.80" height="19.70" fill="#f0f0f0"/>
<line x1="1067.00" y1="934.90" x2="1131.80" y2="934.90" stroke="#707070" stroke-width="1.6"/>
<text x="1069.00" y="930.30" font-family="Liberation Sans" font-size="15.26" fill="#000" textLength="29.80" lengthAdjust="spacingAndGlyphs" xml:space="preserve">6216</text>
<rect x="1134.80" y="913.00" width="47.20" height="22.70" fill="#fbfbfb" rx="2"/>
<rect x="1136.30" y="914.50" width="44.70" height="19.70" fill="#f0f0f0"/>
<line x1="1135.80" y1="934.90" x2="1181.50" y2="934.90" stroke="#707070" stroke-width="1.6"/>
<text x="1139.00" y="930.30" font-family="Liberation Sans" font-size="15.26" fill="#000" textLength="32.67" lengthAdjust="spacingAndGlyphs" xml:space="preserve">1.013</text>
<rect x="1012.50" y="938.30" width="41.50" height="25.00" fill="#ffff00" stroke="#555500" stroke-width="1.3"/>
<text x="1021.30" y="955.40" font-family="Liberation Sans" font-size="15.70" fill="#000" font-weight="bold" textLength="22.07" lengthAdjust="spacingAndGlyphs" xml:space="preserve">Dia</text>
<text x="1059.40" y="952.90" font-family="Liberation Sans" font-size="14.83" fill="#4a5a8c" font-style="italic" textLength="119.42" lengthAdjust="spacingAndGlyphs" xml:space="preserve">Values in memory =&gt;</text>
<rect x="1185.00" y="896.30" width="378.00" height="61.30" fill="#f4f6fb"/>
<rect x="1185.00" y="896.30" width="377.20" height="60.90" fill="#6a6a6a"/>
<rect x="1187.00" y="898.30" width="375.20" height="58.90" fill="#fff8d2"/>
<text x="1214.40" y="909.70" font-family="Liberation Sans" font-size="14.39" fill="#000" textLength="53.59" lengthAdjust="spacingAndGlyphs" xml:space="preserve">Fit quality</text>
<rect x="1188.50" y="914.90" width="119.90" height="24.80" fill="#fff" stroke="#7a7a7a" stroke-width="1" rx="2"/>
<text x="1192.00" y="931.20" font-family="Liberation Sans" font-size="15.70" fill="#000" textLength="91.99" lengthAdjust="spacingAndGlyphs" xml:space="preserve">Not constrained</text>
<path d="M1293,926 L1298,931 L1302.8,926" fill="none" stroke="#555" stroke-width="1.1"/>
<text x="1311.90" y="909.70" font-family="Liberation Sans" font-size="14.39" fill="#000" textLength="49.81" lengthAdjust="spacingAndGlyphs" xml:space="preserve">Ph Comm</text>
<rect x="1314.90" y="914.80" width="47.10" height="22.40" fill="#fbfbfb" rx="2"/>
<rect x="1316.40" y="916.30" width="44.60" height="19.40" fill="#f0f0f0"/>
<line x1="1315.90" y1="936.40" x2="1361.50" y2="936.40" stroke="#707070" stroke-width="1.6"/>
<text x="1317.50" y="931.00" font-family="Liberation Sans" font-size="15.26" fill="#000" textLength="13.52" lengthAdjust="spacingAndGlyphs" xml:space="preserve">0°</text>
<text x="1190.70" y="953.50" font-family="Liberation Sans" font-size="15.70" fill="#8a28a8" textLength="92.29" lengthAdjust="spacingAndGlyphs" xml:space="preserve">Not constrained</text>
<text x="1316.50" y="951.00" font-family="Liberation Sans" font-size="15.26" fill="#8a28a8" textLength="13.52" lengthAdjust="spacingAndGlyphs" xml:space="preserve">0°</text>
<text x="1375.70" y="909.60" font-family="Liberation Sans" font-size="14.53" fill="#000" textLength="71.08" lengthAdjust="spacingAndGlyphs" xml:space="preserve">Minimum dia</text>
<text x="1470.80" y="910.80" font-family="Liberation Sans" font-size="14.53" fill="#000" textLength="74.15" lengthAdjust="spacingAndGlyphs" xml:space="preserve">Maximum dia</text>
<rect x="1373.00" y="915.00" width="46.00" height="23.00" fill="#fbfbfb" rx="2"/>
<rect x="1374.50" y="916.50" width="43.50" height="20.00" fill="#ffc0cb"/>
<line x1="1374.00" y1="937.20" x2="1418.50" y2="937.20" stroke="#707070" stroke-width="1.6"/>
<rect x="1422.80" y="914.60" width="36.50" height="28.70" fill="#fafafa" rx="4"/>
<rect x="1425.00" y="917.40" width="31.50" height="22.60" fill="#adff2f"/>
<text x="1430.60" y="933.60" font-family="Liberation Sans" font-size="15.99" fill="#000" textLength="18.41" lengthAdjust="spacingAndGlyphs" xml:space="preserve">Set</text>
<rect x="1470.00" y="915.00" width="47.00" height="23.00" fill="#fbfbfb" rx="2"/>
<rect x="1471.50" y="916.50" width="44.50" height="20.00" fill="#ffc0cb"/>
<line x1="1471.00" y1="937.20" x2="1516.50" y2="937.20" stroke="#707070" stroke-width="1.6"/>
<rect x="1520.00" y="914.60" width="36.70" height="28.70" fill="#fafafa" rx="4"/>
<rect x="1523.00" y="917.40" width="31.40" height="22.60" fill="#adff2f"/>
<text x="1527.80" y="933.60" font-family="Liberation Sans" font-size="15.99" fill="#000" textLength="18.41" lengthAdjust="spacingAndGlyphs" xml:space="preserve">Set</text>
<text x="1374.30" y="953.00" font-family="Liberation Sans" font-size="14.97" fill="#8a28a8" textLength="7.22" lengthAdjust="spacingAndGlyphs" xml:space="preserve">0</text>
<line x1="1472.00" y1="949.50" x2="1476.50" y2="949.50" stroke="#5a2ab0" stroke-width="1.4"/>
<line x1="1479.50" y1="949.50" x2="1484.00" y2="949.50" stroke="#5a2ab0" stroke-width="1.4"/>
<line x1="1487.00" y1="949.50" x2="1491.50" y2="949.50" stroke="#5a2ab0" stroke-width="1.4"/>
<line x1="1494.50" y1="949.50" x2="1499.00" y2="949.50" stroke="#5a2ab0" stroke-width="1.4"/>
<text x="1017.70" y="978.40" font-family="Liberation Sans" font-size="14.68" fill="#4a5a7a" textLength="67.81" lengthAdjust="spacingAndGlyphs" xml:space="preserve">Version info</text>
<rect x="1093.70" y="963.20" width="335.70" height="22.30" fill="#fbfbfb" rx="2"/>
<rect x="1095.20" y="964.70" width="333.20" height="19.30" fill="#f0f0f0"/>
<line x1="1094.70" y1="984.70" x2="1428.90" y2="984.70" stroke="#707070" stroke-width="1.6"/>
<text x="1096.90" y="979.70" font-family="Liberation Sans" font-size="15.26" fill="#000" textLength="100.09" lengthAdjust="spacingAndGlyphs" xml:space="preserve">2022-10-18, Q=3</text>
<text x="1017.00" y="1009.50" font-family="Liberation Sans" font-size="14.68" fill="#4a5a7a" textLength="69.72" lengthAdjust="spacingAndGlyphs" xml:space="preserve">Image scale</text>
<rect x="1094.40" y="994.30" width="335.90" height="26.70" fill="#fff8d2"/>
<line x1="1107.40" y1="1000.60" x2="1107.40" y2="1005.00" stroke="#8a8a8a" stroke-width="1"/>
<line x1="1115.00" y1="1000.60" x2="1115.00" y2="1005.00" stroke="#8a8a8a" stroke-width="1"/>
<line x1="1122.60" y1="1000.60" x2="1122.60" y2="1005.00" stroke="#8a8a8a" stroke-width="1"/>
<line x1="1130.20" y1="1000.60" x2="1130.20" y2="1005.00" stroke="#8a8a8a" stroke-width="1"/>
<line x1="1137.80" y1="1000.60" x2="1137.80" y2="1005.00" stroke="#8a8a8a" stroke-width="1"/>
<line x1="1145.40" y1="1000.60" x2="1145.40" y2="1005.00" stroke="#8a8a8a" stroke-width="1"/>
<line x1="1153.00" y1="1000.60" x2="1153.00" y2="1005.00" stroke="#8a8a8a" stroke-width="1"/>
<line x1="1160.60" y1="1000.60" x2="1160.60" y2="1005.00" stroke="#8a8a8a" stroke-width="1"/>
<line x1="1168.20" y1="1000.60" x2="1168.20" y2="1005.00" stroke="#8a8a8a" stroke-width="1"/>
<line x1="1175.80" y1="1000.60" x2="1175.80" y2="1005.00" stroke="#8a8a8a" stroke-width="1"/>
<line x1="1183.40" y1="1000.60" x2="1183.40" y2="1005.00" stroke="#8a8a8a" stroke-width="1"/>
<line x1="1191.00" y1="1000.60" x2="1191.00" y2="1005.00" stroke="#8a8a8a" stroke-width="1"/>
<line x1="1198.60" y1="1000.60" x2="1198.60" y2="1005.00" stroke="#8a8a8a" stroke-width="1"/>
<line x1="1206.20" y1="1000.60" x2="1206.20" y2="1005.00" stroke="#8a8a8a" stroke-width="1"/>
<line x1="1213.80" y1="1000.60" x2="1213.80" y2="1005.00" stroke="#8a8a8a" stroke-width="1"/>
<line x1="1221.40" y1="1000.60" x2="1221.40" y2="1005.00" stroke="#8a8a8a" stroke-width="1"/>
<line x1="1229.00" y1="1000.60" x2="1229.00" y2="1005.00" stroke="#8a8a8a" stroke-width="1"/>
<line x1="1236.60" y1="1000.60" x2="1236.60" y2="1005.00" stroke="#8a8a8a" stroke-width="1"/>
<line x1="1244.20" y1="1000.60" x2="1244.20" y2="1005.00" stroke="#8a8a8a" stroke-width="1"/>
<line x1="1251.80" y1="1000.60" x2="1251.80" y2="1005.00" stroke="#8a8a8a" stroke-width="1"/>
<line x1="1259.40" y1="1000.60" x2="1259.40" y2="1005.00" stroke="#8a8a8a" stroke-width="1"/>
<line x1="1267.00" y1="1000.60" x2="1267.00" y2="1005.00" stroke="#8a8a8a" stroke-width="1"/>
<line x1="1274.60" y1="1000.60" x2="1274.60" y2="1005.00" stroke="#8a8a8a" stroke-width="1"/>
<line x1="1282.20" y1="1000.60" x2="1282.20" y2="1005.00" stroke="#8a8a8a" stroke-width="1"/>
<line x1="1289.80" y1="1000.60" x2="1289.80" y2="1005.00" stroke="#8a8a8a" stroke-width="1"/>
<line x1="1297.40" y1="1000.60" x2="1297.40" y2="1005.00" stroke="#8a8a8a" stroke-width="1"/>
<line x1="1305.00" y1="1000.60" x2="1305.00" y2="1005.00" stroke="#8a8a8a" stroke-width="1"/>
<line x1="1312.60" y1="1000.60" x2="1312.60" y2="1005.00" stroke="#8a8a8a" stroke-width="1"/>
<line x1="1320.20" y1="1000.60" x2="1320.20" y2="1005.00" stroke="#8a8a8a" stroke-width="1"/>
<line x1="1327.80" y1="1000.60" x2="1327.80" y2="1005.00" stroke="#8a8a8a" stroke-width="1"/>
<line x1="1335.40" y1="1000.60" x2="1335.40" y2="1005.00" stroke="#8a8a8a" stroke-width="1"/>
<line x1="1343.00" y1="1000.60" x2="1343.00" y2="1005.00" stroke="#8a8a8a" stroke-width="1"/>
<line x1="1350.60" y1="1000.60" x2="1350.60" y2="1005.00" stroke="#8a8a8a" stroke-width="1"/>
<line x1="1358.20" y1="1000.60" x2="1358.20" y2="1005.00" stroke="#8a8a8a" stroke-width="1"/>
<line x1="1365.80" y1="1000.60" x2="1365.80" y2="1005.00" stroke="#8a8a8a" stroke-width="1"/>
<line x1="1373.40" y1="1000.60" x2="1373.40" y2="1005.00" stroke="#8a8a8a" stroke-width="1"/>
<line x1="1381.00" y1="1000.60" x2="1381.00" y2="1005.00" stroke="#8a8a8a" stroke-width="1"/>
<line x1="1388.60" y1="1000.60" x2="1388.60" y2="1005.00" stroke="#8a8a8a" stroke-width="1"/>
<line x1="1396.20" y1="1000.60" x2="1396.20" y2="1005.00" stroke="#8a8a8a" stroke-width="1"/>
<line x1="1403.80" y1="1000.60" x2="1403.80" y2="1005.00" stroke="#8a8a8a" stroke-width="1"/>
<line x1="1411.40" y1="1000.60" x2="1411.40" y2="1005.00" stroke="#8a8a8a" stroke-width="1"/>
<line x1="1419.00" y1="1000.60" x2="1419.00" y2="1005.00" stroke="#8a8a8a" stroke-width="1"/>
<rect x="1102.00" y="1014.00" width="320.00" height="4.40" fill="#e6e7e8" stroke="#d4d4d4" stroke-width="0.8"/>
<path d="M1263,1021 v-9 l5,-3.8 l5,3.8 v9z" fill="#0a6fd6"/>
<rect x="1442.00" y="966.70" width="121.40" height="57.80" fill="#fafafa" rx="5"/>
<rect x="1445.30" y="970.00" width="114.70" height="50.70" fill="#ffc0cb"/>
<text x="1455.80" y="991.90" font-family="Liberation Sans" font-size="14.68" fill="#a0002a" font-weight="bold" textLength="91.72" lengthAdjust="spacingAndGlyphs" xml:space="preserve">Save/update</text>
<text x="1460.00" y="1008.20" font-family="Liberation Sans" font-size="14.68" fill="#a0002a" font-weight="bold" textLength="81.64" lengthAdjust="spacingAndGlyphs" xml:space="preserve">model 6216</text>
</svg></body></html>
